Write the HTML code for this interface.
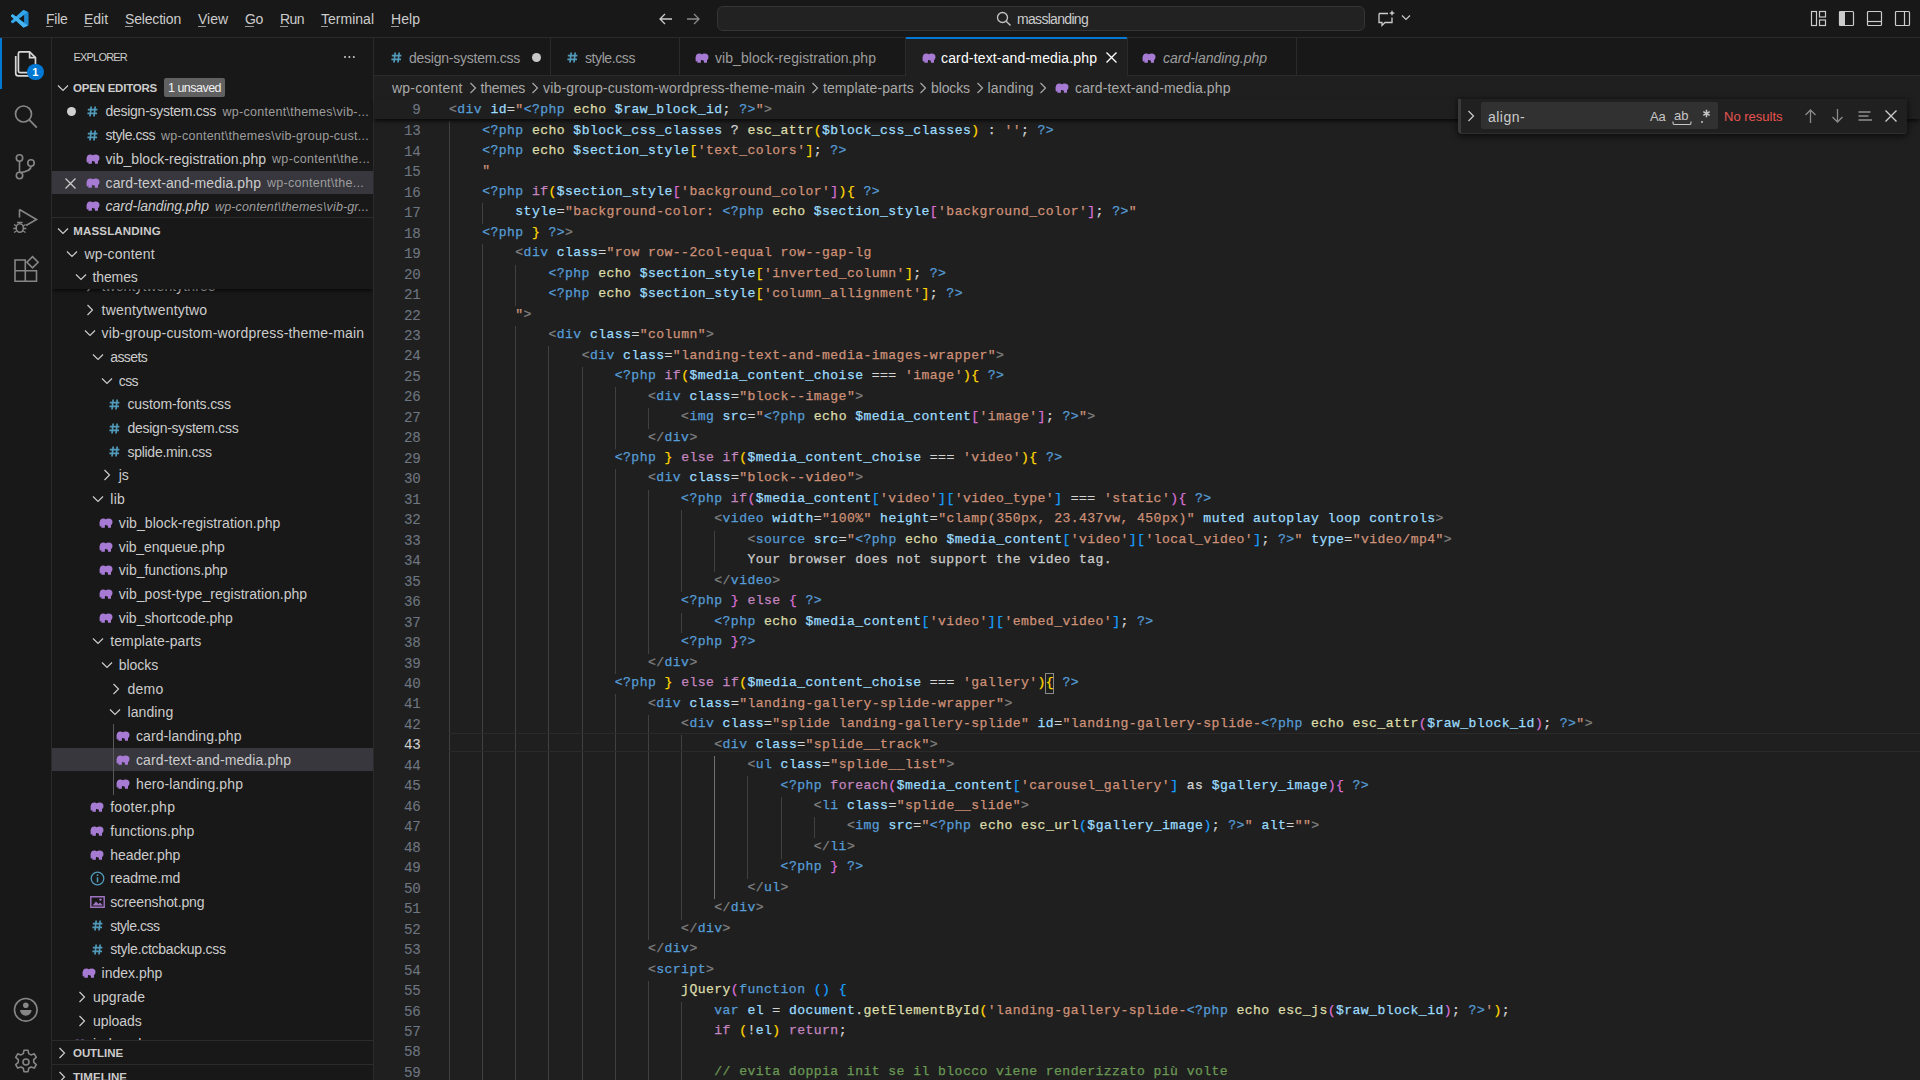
<!DOCTYPE html>
<html><head><meta charset="utf-8"><title>VS Code</title><style>
html,body{margin:0;padding:0;background:#1f1f1f;width:1920px;height:1080px;overflow:hidden}
body{position:relative;font-family:"Liberation Sans",sans-serif}
.box{position:absolute}
.ic{position:absolute;overflow:visible}
.t{position:absolute;white-space:pre;line-height:20px;height:20px}
.ln{position:absolute;left:380px;width:40.5px;text-align:right;font-family:"Liberation Mono",monospace;font-size:14.2px;letter-spacing:-0.230px;-webkit-text-stroke:0.1px currentColor;line-height:20.47px;height:20.47px;white-space:pre}
.cl{position:absolute;font-family:"Liberation Mono",monospace;font-size:13.1px;letter-spacing:0.430px;line-height:20.47px;height:20.47px;white-space:pre;-webkit-text-stroke:0.25px currentColor}
.qt{color:#808080}.qn{color:#569cd6}.qa{color:#9cdcfe}.qs{color:#ce9178}.qp{color:#569cd6}.qf{color:#dcdcaa}.qv{color:#9cdcfe}.qk{color:#c586c0}.qw{color:#cccccc}.qo{color:#d4d4d4}.qg{color:#ffd700}.qr{color:#da70d6}.qb{color:#179fff}.qc{color:#6a9955}.qx{color:#cccccc}</style></head>
<body>
<div class="box" style="left:0;top:0;width:1920px;height:37px;background:#181818;border-bottom:1px solid #2b2b2b"></div>
<svg class="ic" style="left:10.5px;top:9.5px" width="17.5" height="17.5" viewBox="0 0 100 100"><path fill="#1f8ad2" d="M96.5 10.8L75.9.9c-2.4-1.2-5.2-.7-7.1 1.2L29.4 38 12.2 25c-1.6-1.2-3.8-1.1-5.3.2L1.4 30.3c-1.8 1.7-1.8 4.5 0 6.2L16.3 50 1.4 63.5c-1.8 1.7-1.8 4.5 0 6.2l5.5 5c1.5 1.4 3.7 1.5 5.3.2L29.4 62l39.4 35.9c1.9 1.9 4.7 2.4 7.1 1.2l20.6-9.9c2.2-1 3.5-3.2 3.5-5.6V16.4c0-2.4-1.4-4.6-3.5-5.6zM75 72.7L45.1 50 75 27.3v45.4z"/><path fill="#35a7ec" d="M96.5 10.8L75.9.9c-2.4-1.2-5.2-.7-7.1 1.2L1.4 63.5c-1.8 1.7-1.8 4.5 0 6.2l5.5 5c1.5 1.4 3.7 1.5 5.3.2L93.3 13.2c2.7-2.1 6.7-.1 6.7 3.3v-.2c0-2.4-1.4-4.5-3.5-5.5z" opacity=".9"/><path fill="#45b5f2" d="M75.9 99.1c-2.4 1.2-5.2.7-7.1-1.2L1.4 36.5c-1.8-1.7-1.8-4.5 0-6.2l5.5-5c1.5-1.4 3.7-1.5 5.3-.2l81.1 61.8c2.7 2.1 6.7.1 6.7-3.3v.2c0 2.4-1.4 4.5-3.5 5.5z"/></svg>
<div class="t" style="left:46.00px;top:8.50px;font-size:14px;color:#cccccc;letter-spacing:-0.262px;">File</div>
<div class="box" style="left:46.0px;top:26px;width:6.8px;height:1px;background:#9a9a9a"></div>
<div class="t" style="left:84.00px;top:8.50px;font-size:14px;color:#cccccc;letter-spacing:-0.031px;">Edit</div>
<div class="box" style="left:84.0px;top:26px;width:7.5px;height:1px;background:#9a9a9a"></div>
<div class="t" style="left:125.00px;top:8.50px;font-size:14px;color:#cccccc;letter-spacing:-0.175px;">Selection</div>
<div class="box" style="left:125.0px;top:26px;width:7.5px;height:1px;background:#9a9a9a"></div>
<div class="t" style="left:198.00px;top:8.50px;font-size:14px;color:#cccccc;letter-spacing:-0.023px;">View</div>
<div class="box" style="left:198.0px;top:26px;width:7.5px;height:1px;background:#9a9a9a"></div>
<div class="t" style="left:245.00px;top:8.50px;font-size:14px;color:#cccccc;letter-spacing:-0.336px;">Go</div>
<div class="box" style="left:245.0px;top:26px;width:8.7px;height:1px;background:#9a9a9a"></div>
<div class="t" style="left:280.00px;top:8.50px;font-size:14px;color:#cccccc;letter-spacing:-0.557px;">Run</div>
<div class="box" style="left:280.0px;top:26px;width:8.1px;height:1px;background:#9a9a9a"></div>
<div class="t" style="left:321.00px;top:8.50px;font-size:14px;color:#cccccc;letter-spacing:0.016px;">Terminal</div>
<div class="box" style="left:321.0px;top:26px;width:6.8px;height:1px;background:#9a9a9a"></div>
<div class="t" style="left:391.00px;top:8.50px;font-size:14px;color:#cccccc;letter-spacing:0.055px;">Help</div>
<div class="box" style="left:391.0px;top:26px;width:8.1px;height:1px;background:#9a9a9a"></div>
<svg class="ic" style="left:657px;top:11px" width="17" height="16" viewBox="0 0 17 16"><path d="M15 8H3M8 3L3 8l5 5" fill="none" stroke="#cccccc" stroke-width="1.3"/></svg>
<svg class="ic" style="left:685px;top:11px" width="17" height="16" viewBox="0 0 17 16"><path d="M2 8h12M9 3l5 5-5 5" fill="none" stroke="#8a8a8a" stroke-width="1.3"/></svg>
<div class="box" style="left:717px;top:6px;width:646px;height:23px;background:#222222;border:1px solid #353535;border-radius:6px"></div>
<svg class="ic" style="left:996px;top:11px" width="16" height="16" viewBox="0 0 16 16"><circle cx="6.5" cy="6.5" r="5" fill="none" stroke="#c4c4c4" stroke-width="1.3"/><path d="M10.2 10.2l4.3 4.3" stroke="#c4c4c4" stroke-width="1.4"/></svg>
<div class="t" style="left:1017.00px;top:9.00px;font-size:14px;color:#cccccc;letter-spacing:-0.688px;">masslanding</div>
<svg class="ic" style="left:1377px;top:9px" width="20" height="19" viewBox="0 0 20 19"><path d="M2 4.5h9M2 4.5v9h3v3l3-3h7v-5" fill="none" stroke="#cccccc" stroke-width="1.3"/><path d="M15 1l.9 2.2 2.2.8-2.2.9L15 7l-.9-2.1L12 4l2.1-.8z" fill="#cccccc"/></svg>
<svg class="ic" style="left:1401px;top:14px" width="10" height="7" viewBox="0 0 10 7"><path d="M1 1.5l4 4 4-4" fill="none" stroke="#cccccc" stroke-width="1.2"/></svg>
<svg class="ic" style="left:1810px;top:10px" width="17" height="17" viewBox="0 0 17 17"><rect x="1.5" y="1.5" width="5" height="14" fill="none" stroke="#cccccc" stroke-width="1.2"/><rect x="9.5" y="1.5" width="6" height="5.5" fill="none" stroke="#cccccc" stroke-width="1.2"/><rect x="9.5" y="10" width="6" height="5.5" fill="none" stroke="#cccccc" stroke-width="1.2"/></svg>
<svg class="ic" style="left:1838px;top:10px" width="17" height="17" viewBox="0 0 17 17"><rect x="1.5" y="1.5" width="14" height="14" rx="1" fill="none" stroke="#cccccc" stroke-width="1.2"/><rect x="1.5" y="1.5" width="5.5" height="14" fill="#cccccc"/></svg>
<svg class="ic" style="left:1866px;top:10px" width="17" height="17" viewBox="0 0 17 17"><rect x="1.5" y="1.5" width="14" height="14" rx="1" fill="none" stroke="#cccccc" stroke-width="1.2"/><path d="M1.5 11.5h14" stroke="#cccccc" stroke-width="1.2"/></svg>
<svg class="ic" style="left:1894px;top:10px" width="17" height="17" viewBox="0 0 17 17"><rect x="1.5" y="1.5" width="14" height="14" rx="1" fill="none" stroke="#cccccc" stroke-width="1.2"/><path d="M10.5 1.5v14" stroke="#cccccc" stroke-width="1.2"/></svg>
<div class="box" style="left:0;top:38px;width:51px;height:1042px;background:#181818;border-right:1px solid #2b2b2b"></div>
<div class="box" style="left:0;top:38px;width:2px;height:51px;background:#0078d4"></div>
<svg class="ic" style="left:12.5px;top:46.5px" width="30" height="32" viewBox="0 0 28 30"><path d="M6.5 4.5h9l5.5 5.5v12.5a1.5 1.5 0 0 1-1.5 1.5h-13a1.5 1.5 0 0 1-1.5-1.5v-16.5a1.5 1.5 0 0 1 1.5-1.5z" fill="none" stroke="#d7d7d7" stroke-width="1.6"/><path d="M15.5 4.5v5.5h5.5" fill="none" stroke="#d7d7d7" stroke-width="1.6"/><path d="M2.5 8.5v16a2.5 2.5 0 0 0 2.5 2.5h11" fill="none" stroke="#d7d7d7" stroke-width="1.6"/></svg>
<div class="box" style="left:27px;top:63.7px;width:16.5px;height:16.5px;border-radius:50%;background:#0078d4"></div>
<div class="t" style="left:27.3px;top:62px;width:16px;text-align:center;font-size:11px;color:#ffffff;font-weight:bold">1</div>
<svg class="ic" style="left:11.5px;top:102px" width="30" height="30" viewBox="0 0 30 30"><circle cx="11.5" cy="12" r="8" fill="none" stroke="#868686" stroke-width="1.7"/><path d="M17.3 17.8l7.5 7.8" stroke="#868686" stroke-width="1.8"/></svg>
<svg class="ic" style="left:11px;top:151px" width="30" height="30" viewBox="0 0 30 30"><circle cx="8.5" cy="7" r="3.2" fill="none" stroke="#868686" stroke-width="1.6"/><circle cx="20" cy="12" r="3.2" fill="none" stroke="#868686" stroke-width="1.6"/><circle cx="8.5" cy="24.5" r="3.2" fill="none" stroke="#868686" stroke-width="1.6"/><path d="M8.5 10.2v11.1M20 15.2c0 4-4 5.3-11.3 6.5" fill="none" stroke="#868686" stroke-width="1.6"/></svg>
<svg class="ic" style="left:11px;top:204.5px" width="30" height="30" viewBox="0 0 30 30"><path d="M8.5 4.5v8M8.5 4.5l17 10-10.5 6" fill="none" stroke="#868686" stroke-width="1.6"/><ellipse cx="8.8" cy="23" rx="3.6" ry="4.2" fill="none" stroke="#868686" stroke-width="1.6"/><path d="M3 19.5l2.5 1.5M14.6 19.5l-2.5 1.5M2.3 23.5h3M12.3 23.5h3M3 27.5l2.5-1.5M14.6 27.5l-2.5-1.5M6 17.5h5.6" fill="none" stroke="#868686" stroke-width="1.4"/></svg>
<svg class="ic" style="left:11px;top:254px" width="30" height="30" viewBox="0 0 30 30"><path d="M4 6h10.3v10.8H4zM4 16.8h10.3v10.5H4zM14.3 16.8h11.2v10.5H14.3z" fill="none" stroke="#868686" stroke-width="1.6"/><path d="M21.5 2.6l5.6 5.6-5.6 5.6-5.6-5.6z" fill="none" stroke="#868686" stroke-width="1.6"/></svg>
<svg class="ic" style="left:11px;top:995px" width="30" height="30" viewBox="0 0 30 30"><circle cx="14.8" cy="14.8" r="11.3" fill="none" stroke="#868686" stroke-width="1.6"/><circle cx="14.8" cy="10.3" r="2.8" fill="#868686"/><path d="M9 15h11.6a5.8 5.8 0 0 1-11.6 0z" fill="#868686"/></svg>
<svg class="ic" style="left:11px;top:1047px" width="30" height="30" viewBox="0 0 30 30"><path d="M13 3.2h4l.7 3.4 2.3 1.3 3.3-1.1 2 3.5-2.6 2.3v2.7l2.6 2.3-2 3.5-3.3-1.1-2.3 1.3-.7 3.4h-4l-.7-3.4-2.3-1.3-3.3 1.1-2-3.5 2.6-2.3v-2.7L4.7 10.3l2-3.5 3.3 1.1 2.3-1.3z" fill="none" stroke="#868686" stroke-width="1.6" stroke-linejoin="round"/><circle cx="15" cy="15" r="3" fill="none" stroke="#868686" stroke-width="1.6"/></svg>
<div class="box" style="left:52px;top:38px;width:321px;height:1042px;background:#181818;border-right:1px solid #2b2b2b"></div>
<div class="t" style="left:73.50px;top:47.00px;font-size:11px;color:#cccccc;letter-spacing:-0.805px;">EXPLORER</div>
<div class="box" style="left:343.8px;top:55.6px;width:2.6px;height:2.6px;background:#cccccc;border-radius:50%;box-shadow:4.4px 0 0 #cccccc, 8.8px 0 0 #cccccc"></div>
<svg class="ic" style="left:56.50px;top:83.50px" width="12" height="8" viewBox="0 0 12 8"><path d="M1 1.5l5 5 5-5" fill="none" stroke="#cccccc" stroke-width="1.2"/></svg>
<div class="t" style="left:73.00px;top:77.50px;font-size:11.5px;color:#cccccc;letter-spacing:-0.225px;font-weight:bold;">OPEN EDITORS</div>
<div class="box" style="left:164px;top:78px;width:61px;height:19px;background:#616161;border-radius:2px"></div>
<div class="t" style="left:168.00px;top:78.00px;font-size:12.5px;color:#f0f0f0;letter-spacing:-0.521px;">1 unsaved</div>
<div class="box" style="left:52px;top:171px;width:321px;height:22.5px;background:#37373d"></div>
<div class="box" style="left:66.5px;top:106.75px;width:9px;height:9px;border-radius:50%;background:#d0d0d0"></div>
<svg class="ic" style="left:87.00px;top:105.75px" width="11" height="11" viewBox="0 0 11 11"><path d="M4.2 .5L3 10.5M8.2 .5L7 10.5M.8 3.6h9.6M.4 7.4h9.6" fill="none" stroke="#519aba" stroke-width="1.7"/></svg>
<div class="t" style="left:105.50px;top:101.25px;font-size:14px;color:#cccccc;letter-spacing:-0.271px;">design-system.css</div>
<div class="t" style="left:222.50px;top:101.75px;font-size:12.5px;color:#9d9d9d;letter-spacing:0.276px;">wp-content\themes\vib-...</div>
<svg class="ic" style="left:87.00px;top:129.50px" width="11" height="11" viewBox="0 0 11 11"><path d="M4.2 .5L3 10.5M8.2 .5L7 10.5M.8 3.6h9.6M.4 7.4h9.6" fill="none" stroke="#519aba" stroke-width="1.7"/></svg>
<div class="t" style="left:105.50px;top:125.00px;font-size:14px;color:#cccccc;letter-spacing:-0.464px;">style.css</div>
<div class="t" style="left:161.00px;top:125.50px;font-size:12.5px;color:#9d9d9d;letter-spacing:0.267px;">wp-content\themes\vib-group-cust...</div>
<svg class="ic" style="left:85.50px;top:153.75px" width="14" height="10.00" viewBox="0 0 14 10"><g fill="#a77bd4"><circle cx="4.3" cy="3.9" r="3.5"/><ellipse cx="9.6" cy="4.1" rx="3.9" ry="3.6"/><rect x="2.3" y="4.5" width="3.6" height="5.3" rx=".6"/><rect x="8.9" y="4.5" width="3.1" height="5.3" rx=".6"/><rect x=".6" y="3.6" width="2" height="5" rx="1"/></g></svg>
<div class="t" style="left:105.50px;top:148.75px;font-size:14px;color:#cccccc;letter-spacing:0.040px;">vib_block-registration.php</div>
<div class="t" style="left:272.00px;top:149.25px;font-size:12.5px;color:#9d9d9d;letter-spacing:0.330px;">wp-content\the...</div>
<svg class="ic" style="left:64px;top:176.50px" width="13" height="13" viewBox="0 0 13 13"><path d="M1.5 1.5l10 10M11.5 1.5l-10 10" stroke="#cccccc" stroke-width="1.3"/></svg>
<svg class="ic" style="left:85.50px;top:177.50px" width="14" height="10.00" viewBox="0 0 14 10"><g fill="#a77bd4"><circle cx="4.3" cy="3.9" r="3.5"/><ellipse cx="9.6" cy="4.1" rx="3.9" ry="3.6"/><rect x="2.3" y="4.5" width="3.6" height="5.3" rx=".6"/><rect x="8.9" y="4.5" width="3.1" height="5.3" rx=".6"/><rect x=".6" y="3.6" width="2" height="5" rx="1"/></g></svg>
<div class="t" style="left:105.50px;top:172.50px;font-size:14px;color:#cccccc;letter-spacing:0.133px;">card-text-and-media.php</div>
<div class="t" style="left:267.00px;top:173.00px;font-size:12.5px;color:#9d9d9d;letter-spacing:0.271px;">wp-content\the...</div>
<svg class="ic" style="left:85.50px;top:201.25px" width="14" height="10.00" viewBox="0 0 14 10"><g fill="#a77bd4"><circle cx="4.3" cy="3.9" r="3.5"/><ellipse cx="9.6" cy="4.1" rx="3.9" ry="3.6"/><rect x="2.3" y="4.5" width="3.6" height="5.3" rx=".6"/><rect x="8.9" y="4.5" width="3.1" height="5.3" rx=".6"/><rect x=".6" y="3.6" width="2" height="5" rx="1"/></g></svg>
<div class="t" style="left:105.50px;top:196.25px;font-size:14px;color:#cccccc;letter-spacing:-0.046px;font-style:italic;">card-landing.php</div>
<div class="t" style="left:215.00px;top:196.75px;font-size:12.5px;color:#9d9d9d;letter-spacing:0.139px;font-style:italic;">wp-content\themes\vib-gr...</div>
<div class="box" style="left:52px;top:217px;width:321px;height:1px;background:#2b2b2b"></div>
<svg class="ic" style="left:56.50px;top:226.50px" width="12" height="8" viewBox="0 0 12 8"><path d="M1 1.5l5 5 5-5" fill="none" stroke="#cccccc" stroke-width="1.2"/></svg>
<div class="t" style="left:73.20px;top:220.50px;font-size:11.5px;color:#cccccc;letter-spacing:0.187px;font-weight:bold;">MASSLANDING</div>
<div class="box" style="left:52px;top:242px;width:321px;height:798px;overflow:hidden"><div class="box" style="left:0;top:506.30px;width:321px;height:23px;background:#37373d"></div><svg class="ic" style="left:34.10px;top:37.80px" width="8" height="12" viewBox="0 0 8 12"><path d="M1.5 1l5 5-5 5" fill="none" stroke="#cccccc" stroke-width="1.2"/></svg><div class="t" style="left:49.60px;top:33.80px;font-size:14px;color:#cccccc;letter-spacing:0.071px;">twentytwentythree</div><svg class="ic" style="left:34.10px;top:61.50px" width="8" height="12" viewBox="0 0 8 12"><path d="M1.5 1l5 5-5 5" fill="none" stroke="#cccccc" stroke-width="1.2"/></svg><div class="t" style="left:49.60px;top:57.50px;font-size:14px;color:#cccccc;letter-spacing:0.204px;">twentytwentytwo</div><svg class="ic" style="left:31.60px;top:87.20px" width="12" height="8" viewBox="0 0 12 8"><path d="M1 1.5l5 5 5-5" fill="none" stroke="#cccccc" stroke-width="1.2"/></svg><div class="t" style="left:49.60px;top:81.20px;font-size:14px;color:#cccccc;letter-spacing:0.180px;">vib-group-custom-wordpress-theme-main</div><svg class="ic" style="left:40.20px;top:110.90px" width="12" height="8" viewBox="0 0 12 8"><path d="M1 1.5l5 5 5-5" fill="none" stroke="#cccccc" stroke-width="1.2"/></svg><div class="t" style="left:58.20px;top:104.90px;font-size:14px;color:#cccccc;letter-spacing:-0.576px;">assets</div><svg class="ic" style="left:48.80px;top:134.60px" width="12" height="8" viewBox="0 0 12 8"><path d="M1 1.5l5 5 5-5" fill="none" stroke="#cccccc" stroke-width="1.2"/></svg><div class="t" style="left:66.80px;top:128.60px;font-size:14px;color:#cccccc;letter-spacing:-0.667px;">css</div><svg class="ic" style="left:56.90px;top:156.80px" width="11" height="11" viewBox="0 0 11 11"><path d="M4.2 .5L3 10.5M8.2 .5L7 10.5M.8 3.6h9.6M.4 7.4h9.6" fill="none" stroke="#519aba" stroke-width="1.7"/></svg><div class="t" style="left:75.40px;top:152.30px;font-size:14px;color:#cccccc;letter-spacing:-0.094px;">custom-fonts.css</div><svg class="ic" style="left:56.90px;top:180.50px" width="11" height="11" viewBox="0 0 11 11"><path d="M4.2 .5L3 10.5M8.2 .5L7 10.5M.8 3.6h9.6M.4 7.4h9.6" fill="none" stroke="#519aba" stroke-width="1.7"/></svg><div class="t" style="left:75.40px;top:176.00px;font-size:14px;color:#cccccc;letter-spacing:-0.242px;">design-system.css</div><svg class="ic" style="left:56.90px;top:204.20px" width="11" height="11" viewBox="0 0 11 11"><path d="M4.2 .5L3 10.5M8.2 .5L7 10.5M.8 3.6h9.6M.4 7.4h9.6" fill="none" stroke="#519aba" stroke-width="1.7"/></svg><div class="t" style="left:75.40px;top:199.70px;font-size:14px;color:#cccccc;letter-spacing:-0.260px;">splide.min.css</div><svg class="ic" style="left:51.30px;top:227.40px" width="8" height="12" viewBox="0 0 8 12"><path d="M1.5 1l5 5-5 5" fill="none" stroke="#cccccc" stroke-width="1.2"/></svg><div class="t" style="left:66.80px;top:223.40px;font-size:14px;color:#cccccc;letter-spacing:-0.055px;">js</div><svg class="ic" style="left:40.20px;top:253.10px" width="12" height="8" viewBox="0 0 12 8"><path d="M1 1.5l5 5 5-5" fill="none" stroke="#cccccc" stroke-width="1.2"/></svg><div class="t" style="left:58.20px;top:247.10px;font-size:14px;color:#cccccc;letter-spacing:0.333px;">lib</div><svg class="ic" style="left:46.80px;top:275.80px" width="14" height="10.00" viewBox="0 0 14 10"><g fill="#a77bd4"><circle cx="4.3" cy="3.9" r="3.5"/><ellipse cx="9.6" cy="4.1" rx="3.9" ry="3.6"/><rect x="2.3" y="4.5" width="3.6" height="5.3" rx=".6"/><rect x="8.9" y="4.5" width="3.1" height="5.3" rx=".6"/><rect x=".6" y="3.6" width="2" height="5" rx="1"/></g></svg><div class="t" style="left:66.80px;top:270.80px;font-size:14px;color:#cccccc;letter-spacing:0.079px;">vib_block-registration.php</div><svg class="ic" style="left:46.80px;top:299.50px" width="14" height="10.00" viewBox="0 0 14 10"><g fill="#a77bd4"><circle cx="4.3" cy="3.9" r="3.5"/><ellipse cx="9.6" cy="4.1" rx="3.9" ry="3.6"/><rect x="2.3" y="4.5" width="3.6" height="5.3" rx=".6"/><rect x="8.9" y="4.5" width="3.1" height="5.3" rx=".6"/><rect x=".6" y="3.6" width="2" height="5" rx="1"/></g></svg><div class="t" style="left:66.80px;top:294.50px;font-size:14px;color:#cccccc;letter-spacing:-0.108px;">vib_enqueue.php</div><svg class="ic" style="left:46.80px;top:323.20px" width="14" height="10.00" viewBox="0 0 14 10"><g fill="#a77bd4"><circle cx="4.3" cy="3.9" r="3.5"/><ellipse cx="9.6" cy="4.1" rx="3.9" ry="3.6"/><rect x="2.3" y="4.5" width="3.6" height="5.3" rx=".6"/><rect x="8.9" y="4.5" width="3.1" height="5.3" rx=".6"/><rect x=".6" y="3.6" width="2" height="5" rx="1"/></g></svg><div class="t" style="left:66.80px;top:318.20px;font-size:14px;color:#cccccc;letter-spacing:-0.010px;">vib_functions.php</div><svg class="ic" style="left:46.80px;top:346.90px" width="14" height="10.00" viewBox="0 0 14 10"><g fill="#a77bd4"><circle cx="4.3" cy="3.9" r="3.5"/><ellipse cx="9.6" cy="4.1" rx="3.9" ry="3.6"/><rect x="2.3" y="4.5" width="3.6" height="5.3" rx=".6"/><rect x="8.9" y="4.5" width="3.1" height="5.3" rx=".6"/><rect x=".6" y="3.6" width="2" height="5" rx="1"/></g></svg><div class="t" style="left:66.80px;top:341.90px;font-size:14px;color:#cccccc;letter-spacing:0.026px;">vib_post-type_registration.php</div><svg class="ic" style="left:46.80px;top:370.60px" width="14" height="10.00" viewBox="0 0 14 10"><g fill="#a77bd4"><circle cx="4.3" cy="3.9" r="3.5"/><ellipse cx="9.6" cy="4.1" rx="3.9" ry="3.6"/><rect x="2.3" y="4.5" width="3.6" height="5.3" rx=".6"/><rect x="8.9" y="4.5" width="3.1" height="5.3" rx=".6"/><rect x=".6" y="3.6" width="2" height="5" rx="1"/></g></svg><div class="t" style="left:66.80px;top:365.60px;font-size:14px;color:#cccccc;letter-spacing:-0.021px;">vib_shortcode.php</div><svg class="ic" style="left:40.20px;top:395.30px" width="12" height="8" viewBox="0 0 12 8"><path d="M1 1.5l5 5 5-5" fill="none" stroke="#cccccc" stroke-width="1.2"/></svg><div class="t" style="left:58.20px;top:389.30px;font-size:14px;color:#cccccc;letter-spacing:0.129px;">template-parts</div><svg class="ic" style="left:48.80px;top:419.00px" width="12" height="8" viewBox="0 0 12 8"><path d="M1 1.5l5 5 5-5" fill="none" stroke="#cccccc" stroke-width="1.2"/></svg><div class="t" style="left:66.80px;top:413.00px;font-size:14px;color:#cccccc;letter-spacing:-0.070px;">blocks</div><svg class="ic" style="left:59.90px;top:440.70px" width="8" height="12" viewBox="0 0 8 12"><path d="M1.5 1l5 5-5 5" fill="none" stroke="#cccccc" stroke-width="1.2"/></svg><div class="t" style="left:75.40px;top:436.70px;font-size:14px;color:#cccccc;letter-spacing:0.250px;">demo</div><svg class="ic" style="left:57.40px;top:466.40px" width="12" height="8" viewBox="0 0 12 8"><path d="M1 1.5l5 5 5-5" fill="none" stroke="#cccccc" stroke-width="1.2"/></svg><div class="t" style="left:75.40px;top:460.40px;font-size:14px;color:#cccccc;letter-spacing:0.125px;">landing</div><svg class="ic" style="left:64.00px;top:489.10px" width="14" height="10.00" viewBox="0 0 14 10"><g fill="#a77bd4"><circle cx="4.3" cy="3.9" r="3.5"/><ellipse cx="9.6" cy="4.1" rx="3.9" ry="3.6"/><rect x="2.3" y="4.5" width="3.6" height="5.3" rx=".6"/><rect x="8.9" y="4.5" width="3.1" height="5.3" rx=".6"/><rect x=".6" y="3.6" width="2" height="5" rx="1"/></g></svg><div class="t" style="left:84.00px;top:484.10px;font-size:14px;color:#cccccc;letter-spacing:0.079px;">card-landing.php</div><svg class="ic" style="left:64.00px;top:512.80px" width="14" height="10.00" viewBox="0 0 14 10"><g fill="#a77bd4"><circle cx="4.3" cy="3.9" r="3.5"/><ellipse cx="9.6" cy="4.1" rx="3.9" ry="3.6"/><rect x="2.3" y="4.5" width="3.6" height="5.3" rx=".6"/><rect x="8.9" y="4.5" width="3.1" height="5.3" rx=".6"/><rect x=".6" y="3.6" width="2" height="5" rx="1"/></g></svg><div class="t" style="left:84.00px;top:507.80px;font-size:14px;color:#cccccc;letter-spacing:0.111px;">card-text-and-media.php</div><svg class="ic" style="left:64.00px;top:536.50px" width="14" height="10.00" viewBox="0 0 14 10"><g fill="#a77bd4"><circle cx="4.3" cy="3.9" r="3.5"/><ellipse cx="9.6" cy="4.1" rx="3.9" ry="3.6"/><rect x="2.3" y="4.5" width="3.6" height="5.3" rx=".6"/><rect x="8.9" y="4.5" width="3.1" height="5.3" rx=".6"/><rect x=".6" y="3.6" width="2" height="5" rx="1"/></g></svg><div class="t" style="left:84.00px;top:531.50px;font-size:14px;color:#cccccc;letter-spacing:0.124px;">hero-landing.php</div><svg class="ic" style="left:38.20px;top:560.20px" width="14" height="10.00" viewBox="0 0 14 10"><g fill="#a77bd4"><circle cx="4.3" cy="3.9" r="3.5"/><ellipse cx="9.6" cy="4.1" rx="3.9" ry="3.6"/><rect x="2.3" y="4.5" width="3.6" height="5.3" rx=".6"/><rect x="8.9" y="4.5" width="3.1" height="5.3" rx=".6"/><rect x=".6" y="3.6" width="2" height="5" rx="1"/></g></svg><div class="t" style="left:58.20px;top:555.20px;font-size:14px;color:#cccccc;letter-spacing:0.275px;">footer.php</div><svg class="ic" style="left:38.20px;top:583.90px" width="14" height="10.00" viewBox="0 0 14 10"><g fill="#a77bd4"><circle cx="4.3" cy="3.9" r="3.5"/><ellipse cx="9.6" cy="4.1" rx="3.9" ry="3.6"/><rect x="2.3" y="4.5" width="3.6" height="5.3" rx=".6"/><rect x="8.9" y="4.5" width="3.1" height="5.3" rx=".6"/><rect x=".6" y="3.6" width="2" height="5" rx="1"/></g></svg><div class="t" style="left:58.20px;top:578.90px;font-size:14px;color:#cccccc;letter-spacing:0.077px;">functions.php</div><svg class="ic" style="left:38.20px;top:607.60px" width="14" height="10.00" viewBox="0 0 14 10"><g fill="#a77bd4"><circle cx="4.3" cy="3.9" r="3.5"/><ellipse cx="9.6" cy="4.1" rx="3.9" ry="3.6"/><rect x="2.3" y="4.5" width="3.6" height="5.3" rx=".6"/><rect x="8.9" y="4.5" width="3.1" height="5.3" rx=".6"/><rect x=".6" y="3.6" width="2" height="5" rx="1"/></g></svg><div class="t" style="left:58.20px;top:602.60px;font-size:14px;color:#cccccc;letter-spacing:-0.003px;">header.php</div><svg class="ic" style="left:37.70px;top:628.80px" width="15" height="15" viewBox="0 0 15 15"><circle cx="7.5" cy="7.5" r="6.3" fill="none" stroke="#519aba" stroke-width="1.3"/><path d="M7.5 6.3v5" stroke="#519aba" stroke-width="1.5"/><circle cx="7.5" cy="4.2" r=".9" fill="#519aba"/></svg><div class="t" style="left:58.20px;top:626.30px;font-size:14px;color:#cccccc;letter-spacing:-0.085px;">readme.md</div><svg class="ic" style="left:38.20px;top:654.00px" width="15" height="12" viewBox="0 0 15 12"><path d="M.8.8h13.4v10.4H.8z" fill="none" stroke="#a074c4" stroke-width="1.4"/><path d="M2.5 9.5l3.5-4 2.5 2.5 1.5-1.5 3 3z" fill="#a074c4"/><circle cx="10.5" cy="3.6" r="1.2" fill="#a074c4"/></svg><div class="t" style="left:58.20px;top:650.00px;font-size:14px;color:#cccccc;letter-spacing:-0.103px;">screenshot.png</div><svg class="ic" style="left:39.70px;top:678.20px" width="11" height="11" viewBox="0 0 11 11"><path d="M4.2 .5L3 10.5M8.2 .5L7 10.5M.8 3.6h9.6M.4 7.4h9.6" fill="none" stroke="#519aba" stroke-width="1.7"/></svg><div class="t" style="left:58.20px;top:673.70px;font-size:14px;color:#cccccc;letter-spacing:-0.491px;">style.css</div><svg class="ic" style="left:39.70px;top:701.90px" width="11" height="11" viewBox="0 0 11 11"><path d="M4.2 .5L3 10.5M8.2 .5L7 10.5M.8 3.6h9.6M.4 7.4h9.6" fill="none" stroke="#519aba" stroke-width="1.7"/></svg><div class="t" style="left:58.20px;top:697.40px;font-size:14px;color:#cccccc;letter-spacing:-0.267px;">style.ctcbackup.css</div><svg class="ic" style="left:29.60px;top:726.10px" width="14" height="10.00" viewBox="0 0 14 10"><g fill="#a77bd4"><circle cx="4.3" cy="3.9" r="3.5"/><ellipse cx="9.6" cy="4.1" rx="3.9" ry="3.6"/><rect x="2.3" y="4.5" width="3.6" height="5.3" rx=".6"/><rect x="8.9" y="4.5" width="3.1" height="5.3" rx=".6"/><rect x=".6" y="3.6" width="2" height="5" rx="1"/></g></svg><div class="t" style="left:49.60px;top:721.10px;font-size:14px;color:#cccccc;letter-spacing:0.007px;">index.php</div><svg class="ic" style="left:25.50px;top:748.80px" width="8" height="12" viewBox="0 0 8 12"><path d="M1.5 1l5 5-5 5" fill="none" stroke="#cccccc" stroke-width="1.2"/></svg><div class="t" style="left:41.00px;top:744.80px;font-size:14px;color:#cccccc;letter-spacing:0.094px;">upgrade</div><svg class="ic" style="left:25.50px;top:772.50px" width="8" height="12" viewBox="0 0 8 12"><path d="M1.5 1l5 5-5 5" fill="none" stroke="#cccccc" stroke-width="1.2"/></svg><div class="t" style="left:41.00px;top:768.50px;font-size:14px;color:#cccccc;letter-spacing:-0.038px;">uploads</div><svg class="ic" style="left:21.00px;top:797.20px" width="14" height="10.00" viewBox="0 0 14 10"><g fill="#a77bd4"><circle cx="4.3" cy="3.9" r="3.5"/><ellipse cx="9.6" cy="4.1" rx="3.9" ry="3.6"/><rect x="2.3" y="4.5" width="3.6" height="5.3" rx=".6"/><rect x="8.9" y="4.5" width="3.1" height="5.3" rx=".6"/><rect x=".6" y="3.6" width="2" height="5" rx="1"/></g></svg><div class="t" style="left:41.00px;top:792.20px;font-size:14px;color:#cccccc;letter-spacing:0.007px;">index.php</div><div class="box" style="left:61px;top:482px;width:1px;height:71px;background:#585858"></div><div class="box" style="left:0;top:0px;width:321px;height:47px;background:#181818;box-shadow:0 3px 3px -1px rgba(0,0,0,0.6)"></div><svg class="ic" style="left:13.75px;top:7.70px" width="12" height="8" viewBox="0 0 12 8"><path d="M1 1.5l5 5 5-5" fill="none" stroke="#cccccc" stroke-width="1.2"/></svg><div class="t" style="left:32.40px;top:1.70px;font-size:14px;color:#cccccc;letter-spacing:0.195px;">wp-content</div><svg class="ic" style="left:22.50px;top:31.20px" width="12" height="8" viewBox="0 0 12 8"><path d="M1 1.5l5 5 5-5" fill="none" stroke="#cccccc" stroke-width="1.2"/></svg><div class="t" style="left:40.60px;top:25.20px;font-size:14px;color:#cccccc;letter-spacing:-0.148px;">themes</div></div>
<div class="box" style="left:52px;top:1040px;width:321px;height:40px;background:#181818;border-top:1px solid #2b2b2b"></div>
<svg class="ic" style="left:58.00px;top:1047.00px" width="8" height="12" viewBox="0 0 8 12"><path d="M1.5 1l5 5-5 5" fill="none" stroke="#cccccc" stroke-width="1.2"/></svg>
<div class="t" style="left:73.00px;top:1043.00px;font-size:11.5px;color:#cccccc;letter-spacing:-0.069px;font-weight:bold;">OUTLINE</div>
<div class="box" style="left:52px;top:1064.3px;width:321px;height:1px;background:#2b2b2b"></div>
<svg class="ic" style="left:58.00px;top:1071.00px" width="8" height="12" viewBox="0 0 8 12"><path d="M1.5 1l5 5-5 5" fill="none" stroke="#cccccc" stroke-width="1.2"/></svg>
<div class="t" style="left:73.00px;top:1067.00px;font-size:11.5px;color:#cccccc;letter-spacing:0.041px;font-weight:bold;">TIMELINE</div>
<div class="box" style="left:374px;top:38px;width:1546px;height:1042px;background:#1f1f1f"></div>
<div class="box" style="left:374px;top:38px;width:1546px;height:37px;background:#181818;border-bottom:1px solid #2b2b2b"></div>
<div class="box" style="left:374px;top:38px;width:176px;height:37px;background:#181818;border-right:1px solid #2b2b2b"></div>
<svg class="ic" style="left:391.00px;top:52.00px" width="11" height="11" viewBox="0 0 11 11"><path d="M4.2 .5L3 10.5M8.2 .5L7 10.5M.8 3.6h9.6M.4 7.4h9.6" fill="none" stroke="#519aba" stroke-width="1.7"/></svg>
<div class="t" style="left:409.00px;top:47.50px;font-size:14px;color:#9d9d9d;letter-spacing:-0.242px;">design-system.css</div>
<div class="box" style="left:531.5px;top:53.0px;width:9px;height:9px;border-radius:50%;background:#c8c8c8"></div>
<div class="box" style="left:551px;top:38px;width:128px;height:37px;background:#181818;border-right:1px solid #2b2b2b"></div>
<svg class="ic" style="left:567.00px;top:52.00px" width="11" height="11" viewBox="0 0 11 11"><path d="M4.2 .5L3 10.5M8.2 .5L7 10.5M.8 3.6h9.6M.4 7.4h9.6" fill="none" stroke="#519aba" stroke-width="1.7"/></svg>
<div class="t" style="left:585.00px;top:47.50px;font-size:14px;color:#9d9d9d;letter-spacing:-0.408px;">style.css</div>
<div class="box" style="left:680px;top:38px;width:225px;height:37px;background:#181818;border-right:1px solid #2b2b2b"></div>
<svg class="ic" style="left:695.00px;top:52.50px" width="14" height="10.00" viewBox="0 0 14 10"><g fill="#a77bd4"><circle cx="4.3" cy="3.9" r="3.5"/><ellipse cx="9.6" cy="4.1" rx="3.9" ry="3.6"/><rect x="2.3" y="4.5" width="3.6" height="5.3" rx=".6"/><rect x="8.9" y="4.5" width="3.1" height="5.3" rx=".6"/><rect x=".6" y="3.6" width="2" height="5" rx="1"/></g></svg>
<div class="t" style="left:715.00px;top:47.50px;font-size:14px;color:#9d9d9d;letter-spacing:0.059px;">vib_block-registration.php</div>
<div class="box" style="left:906px;top:38px;width:221px;height:38px;background:#1f1f1f;border-right:1px solid #2b2b2b"></div>
<div class="box" style="left:906px;top:37px;width:221px;height:1.5px;background:#0078d4"></div>
<svg class="ic" style="left:922.00px;top:52.50px" width="14" height="10.00" viewBox="0 0 14 10"><g fill="#a77bd4"><circle cx="4.3" cy="3.9" r="3.5"/><ellipse cx="9.6" cy="4.1" rx="3.9" ry="3.6"/><rect x="2.3" y="4.5" width="3.6" height="5.3" rx=".6"/><rect x="8.9" y="4.5" width="3.1" height="5.3" rx=".6"/><rect x=".6" y="3.6" width="2" height="5" rx="1"/></g></svg>
<div class="t" style="left:941.00px;top:47.50px;font-size:14px;color:#ffffff;letter-spacing:0.155px;">card-text-and-media.php</div>
<svg class="ic" style="left:1105px;top:51.0px" width="13" height="13" viewBox="0 0 13 13"><path d="M1.5 1.5l10 10M11.5 1.5l-10 10" stroke="#ffffff" stroke-width="1.4"/></svg>
<div class="box" style="left:1128px;top:38px;width:168px;height:37px;background:#181818;border-right:1px solid #2b2b2b"></div>
<svg class="ic" style="left:1142.00px;top:52.50px" width="14" height="10.00" viewBox="0 0 14 10"><g fill="#a77bd4"><circle cx="4.3" cy="3.9" r="3.5"/><ellipse cx="9.6" cy="4.1" rx="3.9" ry="3.6"/><rect x="2.3" y="4.5" width="3.6" height="5.3" rx=".6"/><rect x="8.9" y="4.5" width="3.1" height="5.3" rx=".6"/><rect x=".6" y="3.6" width="2" height="5" rx="1"/></g></svg>
<div class="t" style="left:1163.00px;top:47.50px;font-size:14px;color:#9d9d9d;letter-spacing:-0.015px;font-style:italic;">card-landing.php</div>
<div class="t" style="left:392.00px;top:78.00px;font-size:14px;color:#a9a9a9;letter-spacing:0.205px;">wp-content</div>
<div class="t" style="left:480.50px;top:78.00px;font-size:14px;color:#a9a9a9;letter-spacing:-0.232px;">themes</div>
<div class="t" style="left:543.00px;top:78.00px;font-size:14px;color:#a9a9a9;letter-spacing:0.167px;">vib-group-custom-wordpress-theme-main</div>
<div class="t" style="left:823.00px;top:78.00px;font-size:14px;color:#a9a9a9;letter-spacing:0.094px;">template-parts</div>
<div class="t" style="left:931.00px;top:78.00px;font-size:14px;color:#a9a9a9;letter-spacing:-0.112px;">blocks</div>
<div class="t" style="left:987.50px;top:78.00px;font-size:14px;color:#a9a9a9;letter-spacing:0.161px;">landing</div>
<svg class="ic" style="left:468.50px;top:82.00px" width="8" height="12" viewBox="0 0 8 12"><path d="M1.5 1l5 5-5 5" fill="none" stroke="#a9a9a9" stroke-width="1.2"/></svg>
<svg class="ic" style="left:530.50px;top:82.00px" width="8" height="12" viewBox="0 0 8 12"><path d="M1.5 1l5 5-5 5" fill="none" stroke="#a9a9a9" stroke-width="1.2"/></svg>
<svg class="ic" style="left:811.00px;top:82.00px" width="8" height="12" viewBox="0 0 8 12"><path d="M1.5 1l5 5-5 5" fill="none" stroke="#a9a9a9" stroke-width="1.2"/></svg>
<svg class="ic" style="left:919.00px;top:82.00px" width="8" height="12" viewBox="0 0 8 12"><path d="M1.5 1l5 5-5 5" fill="none" stroke="#a9a9a9" stroke-width="1.2"/></svg>
<svg class="ic" style="left:975.50px;top:82.00px" width="8" height="12" viewBox="0 0 8 12"><path d="M1.5 1l5 5-5 5" fill="none" stroke="#a9a9a9" stroke-width="1.2"/></svg>
<svg class="ic" style="left:1039.00px;top:82.00px" width="8" height="12" viewBox="0 0 8 12"><path d="M1.5 1l5 5-5 5" fill="none" stroke="#a9a9a9" stroke-width="1.2"/></svg>
<svg class="ic" style="left:1055.00px;top:83.00px" width="14" height="10.00" viewBox="0 0 14 10"><g fill="#a77bd4"><circle cx="4.3" cy="3.9" r="3.5"/><ellipse cx="9.6" cy="4.1" rx="3.9" ry="3.6"/><rect x="2.3" y="4.5" width="3.6" height="5.3" rx=".6"/><rect x="8.9" y="4.5" width="3.1" height="5.3" rx=".6"/><rect x=".6" y="3.6" width="2" height="5" rx="1"/></g></svg>
<div class="t" style="left:1075.00px;top:78.00px;font-size:14px;color:#a9a9a9;letter-spacing:0.133px;">card-text-and-media.php</div>
<div class="box" style="left:449.00px;top:121.30px;width:1px;height:20.77px;background:#404040"></div><div class="box" style="left:449.00px;top:141.77px;width:1px;height:20.77px;background:#404040"></div><div class="box" style="left:449.00px;top:162.24px;width:1px;height:20.77px;background:#404040"></div><div class="box" style="left:449.00px;top:182.71px;width:1px;height:20.77px;background:#404040"></div><div class="box" style="left:449.00px;top:203.18px;width:1px;height:20.77px;background:#404040"></div><div class="box" style="left:482.16px;top:203.18px;width:1px;height:20.77px;background:#404040"></div><div class="box" style="left:449.00px;top:223.65px;width:1px;height:20.77px;background:#404040"></div><div class="box" style="left:449.00px;top:244.12px;width:1px;height:20.77px;background:#404040"></div><div class="box" style="left:482.16px;top:244.12px;width:1px;height:20.77px;background:#404040"></div><div class="box" style="left:449.00px;top:264.59px;width:1px;height:20.77px;background:#404040"></div><div class="box" style="left:482.16px;top:264.59px;width:1px;height:20.77px;background:#404040"></div><div class="box" style="left:515.32px;top:264.59px;width:1px;height:20.77px;background:#404040"></div><div class="box" style="left:449.00px;top:285.06px;width:1px;height:20.77px;background:#404040"></div><div class="box" style="left:482.16px;top:285.06px;width:1px;height:20.77px;background:#404040"></div><div class="box" style="left:515.32px;top:285.06px;width:1px;height:20.77px;background:#404040"></div><div class="box" style="left:449.00px;top:305.53px;width:1px;height:20.77px;background:#404040"></div><div class="box" style="left:482.16px;top:305.53px;width:1px;height:20.77px;background:#404040"></div><div class="box" style="left:449.00px;top:326.00px;width:1px;height:20.77px;background:#404040"></div><div class="box" style="left:482.16px;top:326.00px;width:1px;height:20.77px;background:#404040"></div><div class="box" style="left:515.32px;top:326.00px;width:1px;height:20.77px;background:#404040"></div><div class="box" style="left:449.00px;top:346.47px;width:1px;height:20.77px;background:#404040"></div><div class="box" style="left:482.16px;top:346.47px;width:1px;height:20.77px;background:#404040"></div><div class="box" style="left:515.32px;top:346.47px;width:1px;height:20.77px;background:#404040"></div><div class="box" style="left:548.48px;top:346.47px;width:1px;height:20.77px;background:#404040"></div><div class="box" style="left:449.00px;top:366.94px;width:1px;height:20.77px;background:#404040"></div><div class="box" style="left:482.16px;top:366.94px;width:1px;height:20.77px;background:#404040"></div><div class="box" style="left:515.32px;top:366.94px;width:1px;height:20.77px;background:#404040"></div><div class="box" style="left:548.48px;top:366.94px;width:1px;height:20.77px;background:#404040"></div><div class="box" style="left:581.64px;top:366.94px;width:1px;height:20.77px;background:#404040"></div><div class="box" style="left:449.00px;top:387.41px;width:1px;height:20.77px;background:#404040"></div><div class="box" style="left:482.16px;top:387.41px;width:1px;height:20.77px;background:#404040"></div><div class="box" style="left:515.32px;top:387.41px;width:1px;height:20.77px;background:#404040"></div><div class="box" style="left:548.48px;top:387.41px;width:1px;height:20.77px;background:#404040"></div><div class="box" style="left:581.64px;top:387.41px;width:1px;height:20.77px;background:#404040"></div><div class="box" style="left:614.80px;top:387.41px;width:1px;height:20.77px;background:#404040"></div><div class="box" style="left:449.00px;top:407.88px;width:1px;height:20.77px;background:#404040"></div><div class="box" style="left:482.16px;top:407.88px;width:1px;height:20.77px;background:#404040"></div><div class="box" style="left:515.32px;top:407.88px;width:1px;height:20.77px;background:#404040"></div><div class="box" style="left:548.48px;top:407.88px;width:1px;height:20.77px;background:#404040"></div><div class="box" style="left:581.64px;top:407.88px;width:1px;height:20.77px;background:#404040"></div><div class="box" style="left:614.80px;top:407.88px;width:1px;height:20.77px;background:#404040"></div><div class="box" style="left:647.96px;top:407.88px;width:1px;height:20.77px;background:#404040"></div><div class="box" style="left:449.00px;top:428.35px;width:1px;height:20.77px;background:#404040"></div><div class="box" style="left:482.16px;top:428.35px;width:1px;height:20.77px;background:#404040"></div><div class="box" style="left:515.32px;top:428.35px;width:1px;height:20.77px;background:#404040"></div><div class="box" style="left:548.48px;top:428.35px;width:1px;height:20.77px;background:#404040"></div><div class="box" style="left:581.64px;top:428.35px;width:1px;height:20.77px;background:#404040"></div><div class="box" style="left:614.80px;top:428.35px;width:1px;height:20.77px;background:#404040"></div><div class="box" style="left:449.00px;top:448.82px;width:1px;height:20.77px;background:#404040"></div><div class="box" style="left:482.16px;top:448.82px;width:1px;height:20.77px;background:#404040"></div><div class="box" style="left:515.32px;top:448.82px;width:1px;height:20.77px;background:#404040"></div><div class="box" style="left:548.48px;top:448.82px;width:1px;height:20.77px;background:#404040"></div><div class="box" style="left:581.64px;top:448.82px;width:1px;height:20.77px;background:#404040"></div><div class="box" style="left:449.00px;top:469.29px;width:1px;height:20.77px;background:#404040"></div><div class="box" style="left:482.16px;top:469.29px;width:1px;height:20.77px;background:#404040"></div><div class="box" style="left:515.32px;top:469.29px;width:1px;height:20.77px;background:#404040"></div><div class="box" style="left:548.48px;top:469.29px;width:1px;height:20.77px;background:#404040"></div><div class="box" style="left:581.64px;top:469.29px;width:1px;height:20.77px;background:#404040"></div><div class="box" style="left:614.80px;top:469.29px;width:1px;height:20.77px;background:#404040"></div><div class="box" style="left:449.00px;top:489.76px;width:1px;height:20.77px;background:#404040"></div><div class="box" style="left:482.16px;top:489.76px;width:1px;height:20.77px;background:#404040"></div><div class="box" style="left:515.32px;top:489.76px;width:1px;height:20.77px;background:#404040"></div><div class="box" style="left:548.48px;top:489.76px;width:1px;height:20.77px;background:#404040"></div><div class="box" style="left:581.64px;top:489.76px;width:1px;height:20.77px;background:#404040"></div><div class="box" style="left:614.80px;top:489.76px;width:1px;height:20.77px;background:#404040"></div><div class="box" style="left:647.96px;top:489.76px;width:1px;height:20.77px;background:#404040"></div><div class="box" style="left:449.00px;top:510.23px;width:1px;height:20.77px;background:#404040"></div><div class="box" style="left:482.16px;top:510.23px;width:1px;height:20.77px;background:#404040"></div><div class="box" style="left:515.32px;top:510.23px;width:1px;height:20.77px;background:#404040"></div><div class="box" style="left:548.48px;top:510.23px;width:1px;height:20.77px;background:#404040"></div><div class="box" style="left:581.64px;top:510.23px;width:1px;height:20.77px;background:#404040"></div><div class="box" style="left:614.80px;top:510.23px;width:1px;height:20.77px;background:#404040"></div><div class="box" style="left:647.96px;top:510.23px;width:1px;height:20.77px;background:#404040"></div><div class="box" style="left:681.12px;top:510.23px;width:1px;height:20.77px;background:#404040"></div><div class="box" style="left:449.00px;top:530.70px;width:1px;height:20.77px;background:#404040"></div><div class="box" style="left:482.16px;top:530.70px;width:1px;height:20.77px;background:#404040"></div><div class="box" style="left:515.32px;top:530.70px;width:1px;height:20.77px;background:#404040"></div><div class="box" style="left:548.48px;top:530.70px;width:1px;height:20.77px;background:#404040"></div><div class="box" style="left:581.64px;top:530.70px;width:1px;height:20.77px;background:#404040"></div><div class="box" style="left:614.80px;top:530.70px;width:1px;height:20.77px;background:#404040"></div><div class="box" style="left:647.96px;top:530.70px;width:1px;height:20.77px;background:#404040"></div><div class="box" style="left:681.12px;top:530.70px;width:1px;height:20.77px;background:#404040"></div><div class="box" style="left:714.28px;top:530.70px;width:1px;height:20.77px;background:#404040"></div><div class="box" style="left:449.00px;top:551.17px;width:1px;height:20.77px;background:#404040"></div><div class="box" style="left:482.16px;top:551.17px;width:1px;height:20.77px;background:#404040"></div><div class="box" style="left:515.32px;top:551.17px;width:1px;height:20.77px;background:#404040"></div><div class="box" style="left:548.48px;top:551.17px;width:1px;height:20.77px;background:#404040"></div><div class="box" style="left:581.64px;top:551.17px;width:1px;height:20.77px;background:#404040"></div><div class="box" style="left:614.80px;top:551.17px;width:1px;height:20.77px;background:#404040"></div><div class="box" style="left:647.96px;top:551.17px;width:1px;height:20.77px;background:#404040"></div><div class="box" style="left:681.12px;top:551.17px;width:1px;height:20.77px;background:#404040"></div><div class="box" style="left:714.28px;top:551.17px;width:1px;height:20.77px;background:#404040"></div><div class="box" style="left:449.00px;top:571.64px;width:1px;height:20.77px;background:#404040"></div><div class="box" style="left:482.16px;top:571.64px;width:1px;height:20.77px;background:#404040"></div><div class="box" style="left:515.32px;top:571.64px;width:1px;height:20.77px;background:#404040"></div><div class="box" style="left:548.48px;top:571.64px;width:1px;height:20.77px;background:#404040"></div><div class="box" style="left:581.64px;top:571.64px;width:1px;height:20.77px;background:#404040"></div><div class="box" style="left:614.80px;top:571.64px;width:1px;height:20.77px;background:#404040"></div><div class="box" style="left:647.96px;top:571.64px;width:1px;height:20.77px;background:#404040"></div><div class="box" style="left:681.12px;top:571.64px;width:1px;height:20.77px;background:#404040"></div><div class="box" style="left:449.00px;top:592.11px;width:1px;height:20.77px;background:#404040"></div><div class="box" style="left:482.16px;top:592.11px;width:1px;height:20.77px;background:#404040"></div><div class="box" style="left:515.32px;top:592.11px;width:1px;height:20.77px;background:#404040"></div><div class="box" style="left:548.48px;top:592.11px;width:1px;height:20.77px;background:#404040"></div><div class="box" style="left:581.64px;top:592.11px;width:1px;height:20.77px;background:#404040"></div><div class="box" style="left:614.80px;top:592.11px;width:1px;height:20.77px;background:#404040"></div><div class="box" style="left:647.96px;top:592.11px;width:1px;height:20.77px;background:#404040"></div><div class="box" style="left:449.00px;top:612.58px;width:1px;height:20.77px;background:#404040"></div><div class="box" style="left:482.16px;top:612.58px;width:1px;height:20.77px;background:#404040"></div><div class="box" style="left:515.32px;top:612.58px;width:1px;height:20.77px;background:#404040"></div><div class="box" style="left:548.48px;top:612.58px;width:1px;height:20.77px;background:#404040"></div><div class="box" style="left:581.64px;top:612.58px;width:1px;height:20.77px;background:#404040"></div><div class="box" style="left:614.80px;top:612.58px;width:1px;height:20.77px;background:#404040"></div><div class="box" style="left:647.96px;top:612.58px;width:1px;height:20.77px;background:#404040"></div><div class="box" style="left:681.12px;top:612.58px;width:1px;height:20.77px;background:#404040"></div><div class="box" style="left:449.00px;top:633.05px;width:1px;height:20.77px;background:#404040"></div><div class="box" style="left:482.16px;top:633.05px;width:1px;height:20.77px;background:#404040"></div><div class="box" style="left:515.32px;top:633.05px;width:1px;height:20.77px;background:#404040"></div><div class="box" style="left:548.48px;top:633.05px;width:1px;height:20.77px;background:#404040"></div><div class="box" style="left:581.64px;top:633.05px;width:1px;height:20.77px;background:#404040"></div><div class="box" style="left:614.80px;top:633.05px;width:1px;height:20.77px;background:#404040"></div><div class="box" style="left:647.96px;top:633.05px;width:1px;height:20.77px;background:#404040"></div><div class="box" style="left:449.00px;top:653.52px;width:1px;height:20.77px;background:#404040"></div><div class="box" style="left:482.16px;top:653.52px;width:1px;height:20.77px;background:#404040"></div><div class="box" style="left:515.32px;top:653.52px;width:1px;height:20.77px;background:#404040"></div><div class="box" style="left:548.48px;top:653.52px;width:1px;height:20.77px;background:#404040"></div><div class="box" style="left:581.64px;top:653.52px;width:1px;height:20.77px;background:#404040"></div><div class="box" style="left:614.80px;top:653.52px;width:1px;height:20.77px;background:#404040"></div><div class="box" style="left:449.00px;top:673.99px;width:1px;height:20.77px;background:#404040"></div><div class="box" style="left:482.16px;top:673.99px;width:1px;height:20.77px;background:#404040"></div><div class="box" style="left:515.32px;top:673.99px;width:1px;height:20.77px;background:#404040"></div><div class="box" style="left:548.48px;top:673.99px;width:1px;height:20.77px;background:#404040"></div><div class="box" style="left:581.64px;top:673.99px;width:1px;height:20.77px;background:#404040"></div><div class="box" style="left:449.00px;top:694.46px;width:1px;height:20.77px;background:#404040"></div><div class="box" style="left:482.16px;top:694.46px;width:1px;height:20.77px;background:#404040"></div><div class="box" style="left:515.32px;top:694.46px;width:1px;height:20.77px;background:#404040"></div><div class="box" style="left:548.48px;top:694.46px;width:1px;height:20.77px;background:#404040"></div><div class="box" style="left:581.64px;top:694.46px;width:1px;height:20.77px;background:#404040"></div><div class="box" style="left:614.80px;top:694.46px;width:1px;height:20.77px;background:#404040"></div><div class="box" style="left:449.00px;top:714.93px;width:1px;height:20.77px;background:#404040"></div><div class="box" style="left:482.16px;top:714.93px;width:1px;height:20.77px;background:#404040"></div><div class="box" style="left:515.32px;top:714.93px;width:1px;height:20.77px;background:#404040"></div><div class="box" style="left:548.48px;top:714.93px;width:1px;height:20.77px;background:#404040"></div><div class="box" style="left:581.64px;top:714.93px;width:1px;height:20.77px;background:#404040"></div><div class="box" style="left:614.80px;top:714.93px;width:1px;height:20.77px;background:#404040"></div><div class="box" style="left:647.96px;top:714.93px;width:1px;height:20.77px;background:#404040"></div><div class="box" style="left:449.00px;top:735.40px;width:1px;height:20.77px;background:#404040"></div><div class="box" style="left:482.16px;top:735.40px;width:1px;height:20.77px;background:#404040"></div><div class="box" style="left:515.32px;top:735.40px;width:1px;height:20.77px;background:#404040"></div><div class="box" style="left:548.48px;top:735.40px;width:1px;height:20.77px;background:#404040"></div><div class="box" style="left:581.64px;top:735.40px;width:1px;height:20.77px;background:#404040"></div><div class="box" style="left:614.80px;top:735.40px;width:1px;height:20.77px;background:#404040"></div><div class="box" style="left:647.96px;top:735.40px;width:1px;height:20.77px;background:#404040"></div><div class="box" style="left:681.12px;top:735.40px;width:1px;height:20.77px;background:#404040"></div><div class="box" style="left:449.00px;top:755.87px;width:1px;height:20.77px;background:#404040"></div><div class="box" style="left:482.16px;top:755.87px;width:1px;height:20.77px;background:#404040"></div><div class="box" style="left:515.32px;top:755.87px;width:1px;height:20.77px;background:#404040"></div><div class="box" style="left:548.48px;top:755.87px;width:1px;height:20.77px;background:#404040"></div><div class="box" style="left:581.64px;top:755.87px;width:1px;height:20.77px;background:#404040"></div><div class="box" style="left:614.80px;top:755.87px;width:1px;height:20.77px;background:#404040"></div><div class="box" style="left:647.96px;top:755.87px;width:1px;height:20.77px;background:#404040"></div><div class="box" style="left:681.12px;top:755.87px;width:1px;height:20.77px;background:#404040"></div><div class="box" style="left:714.28px;top:755.87px;width:1px;height:20.77px;background:#707070"></div><div class="box" style="left:449.00px;top:776.34px;width:1px;height:20.77px;background:#404040"></div><div class="box" style="left:482.16px;top:776.34px;width:1px;height:20.77px;background:#404040"></div><div class="box" style="left:515.32px;top:776.34px;width:1px;height:20.77px;background:#404040"></div><div class="box" style="left:548.48px;top:776.34px;width:1px;height:20.77px;background:#404040"></div><div class="box" style="left:581.64px;top:776.34px;width:1px;height:20.77px;background:#404040"></div><div class="box" style="left:614.80px;top:776.34px;width:1px;height:20.77px;background:#404040"></div><div class="box" style="left:647.96px;top:776.34px;width:1px;height:20.77px;background:#404040"></div><div class="box" style="left:681.12px;top:776.34px;width:1px;height:20.77px;background:#404040"></div><div class="box" style="left:714.28px;top:776.34px;width:1px;height:20.77px;background:#707070"></div><div class="box" style="left:747.44px;top:776.34px;width:1px;height:20.77px;background:#404040"></div><div class="box" style="left:449.00px;top:796.81px;width:1px;height:20.77px;background:#404040"></div><div class="box" style="left:482.16px;top:796.81px;width:1px;height:20.77px;background:#404040"></div><div class="box" style="left:515.32px;top:796.81px;width:1px;height:20.77px;background:#404040"></div><div class="box" style="left:548.48px;top:796.81px;width:1px;height:20.77px;background:#404040"></div><div class="box" style="left:581.64px;top:796.81px;width:1px;height:20.77px;background:#404040"></div><div class="box" style="left:614.80px;top:796.81px;width:1px;height:20.77px;background:#404040"></div><div class="box" style="left:647.96px;top:796.81px;width:1px;height:20.77px;background:#404040"></div><div class="box" style="left:681.12px;top:796.81px;width:1px;height:20.77px;background:#404040"></div><div class="box" style="left:714.28px;top:796.81px;width:1px;height:20.77px;background:#707070"></div><div class="box" style="left:747.44px;top:796.81px;width:1px;height:20.77px;background:#404040"></div><div class="box" style="left:780.60px;top:796.81px;width:1px;height:20.77px;background:#404040"></div><div class="box" style="left:449.00px;top:817.28px;width:1px;height:20.77px;background:#404040"></div><div class="box" style="left:482.16px;top:817.28px;width:1px;height:20.77px;background:#404040"></div><div class="box" style="left:515.32px;top:817.28px;width:1px;height:20.77px;background:#404040"></div><div class="box" style="left:548.48px;top:817.28px;width:1px;height:20.77px;background:#404040"></div><div class="box" style="left:581.64px;top:817.28px;width:1px;height:20.77px;background:#404040"></div><div class="box" style="left:614.80px;top:817.28px;width:1px;height:20.77px;background:#404040"></div><div class="box" style="left:647.96px;top:817.28px;width:1px;height:20.77px;background:#404040"></div><div class="box" style="left:681.12px;top:817.28px;width:1px;height:20.77px;background:#404040"></div><div class="box" style="left:714.28px;top:817.28px;width:1px;height:20.77px;background:#707070"></div><div class="box" style="left:747.44px;top:817.28px;width:1px;height:20.77px;background:#404040"></div><div class="box" style="left:780.60px;top:817.28px;width:1px;height:20.77px;background:#404040"></div><div class="box" style="left:813.76px;top:817.28px;width:1px;height:20.77px;background:#404040"></div><div class="box" style="left:449.00px;top:837.75px;width:1px;height:20.77px;background:#404040"></div><div class="box" style="left:482.16px;top:837.75px;width:1px;height:20.77px;background:#404040"></div><div class="box" style="left:515.32px;top:837.75px;width:1px;height:20.77px;background:#404040"></div><div class="box" style="left:548.48px;top:837.75px;width:1px;height:20.77px;background:#404040"></div><div class="box" style="left:581.64px;top:837.75px;width:1px;height:20.77px;background:#404040"></div><div class="box" style="left:614.80px;top:837.75px;width:1px;height:20.77px;background:#404040"></div><div class="box" style="left:647.96px;top:837.75px;width:1px;height:20.77px;background:#404040"></div><div class="box" style="left:681.12px;top:837.75px;width:1px;height:20.77px;background:#404040"></div><div class="box" style="left:714.28px;top:837.75px;width:1px;height:20.77px;background:#707070"></div><div class="box" style="left:747.44px;top:837.75px;width:1px;height:20.77px;background:#404040"></div><div class="box" style="left:780.60px;top:837.75px;width:1px;height:20.77px;background:#404040"></div><div class="box" style="left:449.00px;top:858.22px;width:1px;height:20.77px;background:#404040"></div><div class="box" style="left:482.16px;top:858.22px;width:1px;height:20.77px;background:#404040"></div><div class="box" style="left:515.32px;top:858.22px;width:1px;height:20.77px;background:#404040"></div><div class="box" style="left:548.48px;top:858.22px;width:1px;height:20.77px;background:#404040"></div><div class="box" style="left:581.64px;top:858.22px;width:1px;height:20.77px;background:#404040"></div><div class="box" style="left:614.80px;top:858.22px;width:1px;height:20.77px;background:#404040"></div><div class="box" style="left:647.96px;top:858.22px;width:1px;height:20.77px;background:#404040"></div><div class="box" style="left:681.12px;top:858.22px;width:1px;height:20.77px;background:#404040"></div><div class="box" style="left:714.28px;top:858.22px;width:1px;height:20.77px;background:#707070"></div><div class="box" style="left:747.44px;top:858.22px;width:1px;height:20.77px;background:#404040"></div><div class="box" style="left:449.00px;top:878.69px;width:1px;height:20.77px;background:#404040"></div><div class="box" style="left:482.16px;top:878.69px;width:1px;height:20.77px;background:#404040"></div><div class="box" style="left:515.32px;top:878.69px;width:1px;height:20.77px;background:#404040"></div><div class="box" style="left:548.48px;top:878.69px;width:1px;height:20.77px;background:#404040"></div><div class="box" style="left:581.64px;top:878.69px;width:1px;height:20.77px;background:#404040"></div><div class="box" style="left:614.80px;top:878.69px;width:1px;height:20.77px;background:#404040"></div><div class="box" style="left:647.96px;top:878.69px;width:1px;height:20.77px;background:#404040"></div><div class="box" style="left:681.12px;top:878.69px;width:1px;height:20.77px;background:#404040"></div><div class="box" style="left:714.28px;top:878.69px;width:1px;height:20.77px;background:#707070"></div><div class="box" style="left:449.00px;top:899.16px;width:1px;height:20.77px;background:#404040"></div><div class="box" style="left:482.16px;top:899.16px;width:1px;height:20.77px;background:#404040"></div><div class="box" style="left:515.32px;top:899.16px;width:1px;height:20.77px;background:#404040"></div><div class="box" style="left:548.48px;top:899.16px;width:1px;height:20.77px;background:#404040"></div><div class="box" style="left:581.64px;top:899.16px;width:1px;height:20.77px;background:#404040"></div><div class="box" style="left:614.80px;top:899.16px;width:1px;height:20.77px;background:#404040"></div><div class="box" style="left:647.96px;top:899.16px;width:1px;height:20.77px;background:#404040"></div><div class="box" style="left:681.12px;top:899.16px;width:1px;height:20.77px;background:#404040"></div><div class="box" style="left:449.00px;top:919.63px;width:1px;height:20.77px;background:#404040"></div><div class="box" style="left:482.16px;top:919.63px;width:1px;height:20.77px;background:#404040"></div><div class="box" style="left:515.32px;top:919.63px;width:1px;height:20.77px;background:#404040"></div><div class="box" style="left:548.48px;top:919.63px;width:1px;height:20.77px;background:#404040"></div><div class="box" style="left:581.64px;top:919.63px;width:1px;height:20.77px;background:#404040"></div><div class="box" style="left:614.80px;top:919.63px;width:1px;height:20.77px;background:#404040"></div><div class="box" style="left:647.96px;top:919.63px;width:1px;height:20.77px;background:#404040"></div><div class="box" style="left:449.00px;top:940.10px;width:1px;height:20.77px;background:#404040"></div><div class="box" style="left:482.16px;top:940.10px;width:1px;height:20.77px;background:#404040"></div><div class="box" style="left:515.32px;top:940.10px;width:1px;height:20.77px;background:#404040"></div><div class="box" style="left:548.48px;top:940.10px;width:1px;height:20.77px;background:#404040"></div><div class="box" style="left:581.64px;top:940.10px;width:1px;height:20.77px;background:#404040"></div><div class="box" style="left:614.80px;top:940.10px;width:1px;height:20.77px;background:#404040"></div><div class="box" style="left:449.00px;top:960.57px;width:1px;height:20.77px;background:#404040"></div><div class="box" style="left:482.16px;top:960.57px;width:1px;height:20.77px;background:#404040"></div><div class="box" style="left:515.32px;top:960.57px;width:1px;height:20.77px;background:#404040"></div><div class="box" style="left:548.48px;top:960.57px;width:1px;height:20.77px;background:#404040"></div><div class="box" style="left:581.64px;top:960.57px;width:1px;height:20.77px;background:#404040"></div><div class="box" style="left:614.80px;top:960.57px;width:1px;height:20.77px;background:#404040"></div><div class="box" style="left:449.00px;top:981.04px;width:1px;height:20.77px;background:#404040"></div><div class="box" style="left:482.16px;top:981.04px;width:1px;height:20.77px;background:#404040"></div><div class="box" style="left:515.32px;top:981.04px;width:1px;height:20.77px;background:#404040"></div><div class="box" style="left:548.48px;top:981.04px;width:1px;height:20.77px;background:#404040"></div><div class="box" style="left:581.64px;top:981.04px;width:1px;height:20.77px;background:#404040"></div><div class="box" style="left:614.80px;top:981.04px;width:1px;height:20.77px;background:#404040"></div><div class="box" style="left:647.96px;top:981.04px;width:1px;height:20.77px;background:#404040"></div><div class="box" style="left:449.00px;top:1001.51px;width:1px;height:20.77px;background:#404040"></div><div class="box" style="left:482.16px;top:1001.51px;width:1px;height:20.77px;background:#404040"></div><div class="box" style="left:515.32px;top:1001.51px;width:1px;height:20.77px;background:#404040"></div><div class="box" style="left:548.48px;top:1001.51px;width:1px;height:20.77px;background:#404040"></div><div class="box" style="left:581.64px;top:1001.51px;width:1px;height:20.77px;background:#404040"></div><div class="box" style="left:614.80px;top:1001.51px;width:1px;height:20.77px;background:#404040"></div><div class="box" style="left:647.96px;top:1001.51px;width:1px;height:20.77px;background:#404040"></div><div class="box" style="left:681.12px;top:1001.51px;width:1px;height:20.77px;background:#404040"></div><div class="box" style="left:449.00px;top:1021.98px;width:1px;height:20.77px;background:#404040"></div><div class="box" style="left:482.16px;top:1021.98px;width:1px;height:20.77px;background:#404040"></div><div class="box" style="left:515.32px;top:1021.98px;width:1px;height:20.77px;background:#404040"></div><div class="box" style="left:548.48px;top:1021.98px;width:1px;height:20.77px;background:#404040"></div><div class="box" style="left:581.64px;top:1021.98px;width:1px;height:20.77px;background:#404040"></div><div class="box" style="left:614.80px;top:1021.98px;width:1px;height:20.77px;background:#404040"></div><div class="box" style="left:647.96px;top:1021.98px;width:1px;height:20.77px;background:#404040"></div><div class="box" style="left:681.12px;top:1021.98px;width:1px;height:20.77px;background:#404040"></div><div class="box" style="left:449.00px;top:1042.45px;width:1px;height:20.77px;background:#404040"></div><div class="box" style="left:482.16px;top:1042.45px;width:1px;height:20.77px;background:#404040"></div><div class="box" style="left:515.32px;top:1042.45px;width:1px;height:20.77px;background:#404040"></div><div class="box" style="left:548.48px;top:1042.45px;width:1px;height:20.77px;background:#404040"></div><div class="box" style="left:581.64px;top:1042.45px;width:1px;height:20.77px;background:#404040"></div><div class="box" style="left:614.80px;top:1042.45px;width:1px;height:20.77px;background:#404040"></div><div class="box" style="left:647.96px;top:1042.45px;width:1px;height:20.77px;background:#404040"></div><div class="box" style="left:681.12px;top:1042.45px;width:1px;height:20.77px;background:#404040"></div><div class="box" style="left:449.00px;top:1062.92px;width:1px;height:20.77px;background:#404040"></div><div class="box" style="left:482.16px;top:1062.92px;width:1px;height:20.77px;background:#404040"></div><div class="box" style="left:515.32px;top:1062.92px;width:1px;height:20.77px;background:#404040"></div><div class="box" style="left:548.48px;top:1062.92px;width:1px;height:20.77px;background:#404040"></div><div class="box" style="left:581.64px;top:1062.92px;width:1px;height:20.77px;background:#404040"></div><div class="box" style="left:614.80px;top:1062.92px;width:1px;height:20.77px;background:#404040"></div><div class="box" style="left:647.96px;top:1062.92px;width:1px;height:20.77px;background:#404040"></div><div class="box" style="left:681.12px;top:1062.92px;width:1px;height:20.77px;background:#404040"></div><div class="box" style="left:449px;top:732.6px;width:1471px;height:17.7px;border-top:1.5px solid #2a2a2a;border-bottom:1.5px solid #2a2a2a"></div><div class="box" style="left:1045.38px;top:673.19px;width:8.89px;height:20.47px;border:1px solid #8a8a8a;box-sizing:border-box"></div><div class="ln" style="top:121.30px;color:#6e7681">13</div><div class="cl" style="left:482.16px;top:120.50px"><span class="qp">&lt;?php</span><span class="qw"> </span><span class="qf">echo</span><span class="qw"> </span><span class="qv">$block_css_classes</span><span class="qo"> ? </span><span class="qf">esc_attr</span><span class="qg">(</span><span class="qv">$block_css_classes</span><span class="qg">)</span><span class="qo"> : </span><span class="qs">&#x27;&#x27;</span><span class="qo">;</span><span class="qw"> </span><span class="qp">?&gt;</span></div><div class="ln" style="top:141.77px;color:#6e7681">14</div><div class="cl" style="left:482.16px;top:140.97px"><span class="qp">&lt;?php</span><span class="qw"> </span><span class="qf">echo</span><span class="qw"> </span><span class="qv">$section_style</span><span class="qg">[</span><span class="qs">&#x27;text_colors&#x27;</span><span class="qg">]</span><span class="qo">;</span><span class="qw"> </span><span class="qp">?&gt;</span></div><div class="ln" style="top:162.24px;color:#6e7681">15</div><div class="cl" style="left:482.16px;top:161.44px"><span class="qs">&quot;</span></div><div class="ln" style="top:182.71px;color:#6e7681">16</div><div class="cl" style="left:482.16px;top:181.91px"><span class="qp">&lt;?php</span><span class="qw"> </span><span class="qk">if</span><span class="qg">(</span><span class="qv">$section_style</span><span class="qr">[</span><span class="qs">&#x27;background_color&#x27;</span><span class="qr">]</span><span class="qg">)</span><span class="qg">{</span><span class="qw"> </span><span class="qp">?&gt;</span></div><div class="ln" style="top:203.18px;color:#6e7681">17</div><div class="cl" style="left:515.32px;top:202.38px"><span class="qa">style</span><span class="qo">=</span><span class="qs">&quot;background-color: </span><span class="qp">&lt;?php</span><span class="qw"> </span><span class="qf">echo</span><span class="qw"> </span><span class="qv">$section_style</span><span class="qr">[</span><span class="qs">&#x27;background_color&#x27;</span><span class="qr">]</span><span class="qo">;</span><span class="qw"> </span><span class="qp">?&gt;</span><span class="qs">&quot;</span></div><div class="ln" style="top:223.65px;color:#6e7681">18</div><div class="cl" style="left:482.16px;top:222.85px"><span class="qp">&lt;?php</span><span class="qw"> </span><span class="qg">}</span><span class="qw"> </span><span class="qp">?&gt;</span><span class="qt">&gt;</span></div><div class="ln" style="top:244.12px;color:#6e7681">19</div><div class="cl" style="left:515.32px;top:243.32px"><span class="qt">&lt;</span><span class="qn">div</span><span class="qw"> </span><span class="qa">class</span><span class="qo">=</span><span class="qs">&quot;row row--2col-equal row--gap-lg</span></div><div class="ln" style="top:264.59px;color:#6e7681">20</div><div class="cl" style="left:548.48px;top:263.79px"><span class="qp">&lt;?php</span><span class="qw"> </span><span class="qf">echo</span><span class="qw"> </span><span class="qv">$section_style</span><span class="qg">[</span><span class="qs">&#x27;inverted_column&#x27;</span><span class="qg">]</span><span class="qo">;</span><span class="qw"> </span><span class="qp">?&gt;</span></div><div class="ln" style="top:285.06px;color:#6e7681">21</div><div class="cl" style="left:548.48px;top:284.26px"><span class="qp">&lt;?php</span><span class="qw"> </span><span class="qf">echo</span><span class="qw"> </span><span class="qv">$section_style</span><span class="qg">[</span><span class="qs">&#x27;column_allignment&#x27;</span><span class="qg">]</span><span class="qo">;</span><span class="qw"> </span><span class="qp">?&gt;</span></div><div class="ln" style="top:305.53px;color:#6e7681">22</div><div class="cl" style="left:515.32px;top:304.73px"><span class="qs">&quot;</span><span class="qt">&gt;</span></div><div class="ln" style="top:326.00px;color:#6e7681">23</div><div class="cl" style="left:548.48px;top:325.20px"><span class="qt">&lt;</span><span class="qn">div</span><span class="qw"> </span><span class="qa">class</span><span class="qo">=</span><span class="qs">&quot;column&quot;</span><span class="qt">&gt;</span></div><div class="ln" style="top:346.47px;color:#6e7681">24</div><div class="cl" style="left:581.64px;top:345.67px"><span class="qt">&lt;</span><span class="qn">div</span><span class="qw"> </span><span class="qa">class</span><span class="qo">=</span><span class="qs">&quot;landing-text-and-media-images-wrapper&quot;</span><span class="qt">&gt;</span></div><div class="ln" style="top:366.94px;color:#6e7681">25</div><div class="cl" style="left:614.80px;top:366.14px"><span class="qp">&lt;?php</span><span class="qw"> </span><span class="qk">if</span><span class="qg">(</span><span class="qv">$media_content_choise</span><span class="qo"> === </span><span class="qs">&#x27;image&#x27;</span><span class="qg">)</span><span class="qg">{</span><span class="qw"> </span><span class="qp">?&gt;</span></div><div class="ln" style="top:387.41px;color:#6e7681">26</div><div class="cl" style="left:647.96px;top:386.61px"><span class="qt">&lt;</span><span class="qn">div</span><span class="qw"> </span><span class="qa">class</span><span class="qo">=</span><span class="qs">&quot;block--image&quot;</span><span class="qt">&gt;</span></div><div class="ln" style="top:407.88px;color:#6e7681">27</div><div class="cl" style="left:681.12px;top:407.08px"><span class="qt">&lt;</span><span class="qn">img</span><span class="qw"> </span><span class="qa">src</span><span class="qo">=</span><span class="qs">&quot;</span><span class="qp">&lt;?php</span><span class="qw"> </span><span class="qf">echo</span><span class="qw"> </span><span class="qv">$media_content</span><span class="qr">[</span><span class="qs">&#x27;image&#x27;</span><span class="qr">]</span><span class="qo">;</span><span class="qw"> </span><span class="qp">?&gt;</span><span class="qs">&quot;</span><span class="qt">&gt;</span></div><div class="ln" style="top:428.35px;color:#6e7681">28</div><div class="cl" style="left:647.96px;top:427.55px"><span class="qt">&lt;/</span><span class="qn">div</span><span class="qt">&gt;</span></div><div class="ln" style="top:448.82px;color:#6e7681">29</div><div class="cl" style="left:614.80px;top:448.02px"><span class="qp">&lt;?php</span><span class="qw"> </span><span class="qg">}</span><span class="qw"> </span><span class="qk">else</span><span class="qw"> </span><span class="qk">if</span><span class="qg">(</span><span class="qv">$media_content_choise</span><span class="qo"> === </span><span class="qs">&#x27;video&#x27;</span><span class="qg">)</span><span class="qg">{</span><span class="qw"> </span><span class="qp">?&gt;</span></div><div class="ln" style="top:469.29px;color:#6e7681">30</div><div class="cl" style="left:647.96px;top:468.49px"><span class="qt">&lt;</span><span class="qn">div</span><span class="qw"> </span><span class="qa">class</span><span class="qo">=</span><span class="qs">&quot;block--video&quot;</span><span class="qt">&gt;</span></div><div class="ln" style="top:489.76px;color:#6e7681">31</div><div class="cl" style="left:681.12px;top:488.96px"><span class="qp">&lt;?php</span><span class="qw"> </span><span class="qk">if</span><span class="qr">(</span><span class="qv">$media_content</span><span class="qb">[</span><span class="qs">&#x27;video&#x27;</span><span class="qb">]</span><span class="qb">[</span><span class="qs">&#x27;video_type&#x27;</span><span class="qb">]</span><span class="qo"> === </span><span class="qs">&#x27;static&#x27;</span><span class="qr">)</span><span class="qr">{</span><span class="qw"> </span><span class="qp">?&gt;</span></div><div class="ln" style="top:510.23px;color:#6e7681">32</div><div class="cl" style="left:714.28px;top:509.43px"><span class="qt">&lt;</span><span class="qn">video</span><span class="qw"> </span><span class="qa">width</span><span class="qo">=</span><span class="qs">&quot;100%&quot;</span><span class="qw"> </span><span class="qa">height</span><span class="qo">=</span><span class="qs">&quot;clamp(350px, 23.437vw, 450px)&quot;</span><span class="qw"> </span><span class="qa">muted</span><span class="qw"> </span><span class="qa">autoplay</span><span class="qw"> </span><span class="qa">loop</span><span class="qw"> </span><span class="qa">controls</span><span class="qt">&gt;</span></div><div class="ln" style="top:530.70px;color:#6e7681">33</div><div class="cl" style="left:747.44px;top:529.90px"><span class="qt">&lt;</span><span class="qn">source</span><span class="qw"> </span><span class="qa">src</span><span class="qo">=</span><span class="qs">&quot;</span><span class="qp">&lt;?php</span><span class="qw"> </span><span class="qf">echo</span><span class="qw"> </span><span class="qv">$media_content</span><span class="qb">[</span><span class="qs">&#x27;video&#x27;</span><span class="qb">]</span><span class="qb">[</span><span class="qs">&#x27;local_video&#x27;</span><span class="qb">]</span><span class="qo">;</span><span class="qw"> </span><span class="qp">?&gt;</span><span class="qs">&quot;</span><span class="qw"> </span><span class="qa">type</span><span class="qo">=</span><span class="qs">&quot;video/mp4&quot;</span><span class="qt">&gt;</span></div><div class="ln" style="top:551.17px;color:#6e7681">34</div><div class="cl" style="left:747.44px;top:550.37px"><span class="qw">Your browser does not support the video tag.</span></div><div class="ln" style="top:571.64px;color:#6e7681">35</div><div class="cl" style="left:714.28px;top:570.84px"><span class="qt">&lt;/</span><span class="qn">video</span><span class="qt">&gt;</span></div><div class="ln" style="top:592.11px;color:#6e7681">36</div><div class="cl" style="left:681.12px;top:591.31px"><span class="qp">&lt;?php</span><span class="qw"> </span><span class="qr">}</span><span class="qw"> </span><span class="qk">else</span><span class="qw"> </span><span class="qr">{</span><span class="qw"> </span><span class="qp">?&gt;</span></div><div class="ln" style="top:612.58px;color:#6e7681">37</div><div class="cl" style="left:714.28px;top:611.78px"><span class="qp">&lt;?php</span><span class="qw"> </span><span class="qf">echo</span><span class="qw"> </span><span class="qv">$media_content</span><span class="qb">[</span><span class="qs">&#x27;video&#x27;</span><span class="qb">]</span><span class="qb">[</span><span class="qs">&#x27;embed_video&#x27;</span><span class="qb">]</span><span class="qo">;</span><span class="qw"> </span><span class="qp">?&gt;</span></div><div class="ln" style="top:633.05px;color:#6e7681">38</div><div class="cl" style="left:681.12px;top:632.25px"><span class="qp">&lt;?php</span><span class="qw"> </span><span class="qr">}</span><span class="qp">?&gt;</span></div><div class="ln" style="top:653.52px;color:#6e7681">39</div><div class="cl" style="left:647.96px;top:652.72px"><span class="qt">&lt;/</span><span class="qn">div</span><span class="qt">&gt;</span></div><div class="ln" style="top:673.99px;color:#6e7681">40</div><div class="cl" style="left:614.80px;top:673.19px"><span class="qp">&lt;?php</span><span class="qw"> </span><span class="qg">}</span><span class="qw"> </span><span class="qk">else</span><span class="qw"> </span><span class="qk">if</span><span class="qg">(</span><span class="qv">$media_content_choise</span><span class="qo"> === </span><span class="qs">&#x27;gallery&#x27;</span><span class="qg">)</span><span class="qg">{</span><span class="qw"> </span><span class="qp">?&gt;</span></div><div class="ln" style="top:694.46px;color:#6e7681">41</div><div class="cl" style="left:647.96px;top:693.66px"><span class="qt">&lt;</span><span class="qn">div</span><span class="qw"> </span><span class="qa">class</span><span class="qo">=</span><span class="qs">&quot;landing-gallery-splide-wrapper&quot;</span><span class="qt">&gt;</span></div><div class="ln" style="top:714.93px;color:#6e7681">42</div><div class="cl" style="left:681.12px;top:714.13px"><span class="qt">&lt;</span><span class="qn">div</span><span class="qw"> </span><span class="qa">class</span><span class="qo">=</span><span class="qs">&quot;splide landing-gallery-splide&quot;</span><span class="qw"> </span><span class="qa">id</span><span class="qo">=</span><span class="qs">&quot;landing-gallery-splide-</span><span class="qp">&lt;?php</span><span class="qw"> </span><span class="qf">echo</span><span class="qw"> </span><span class="qf">esc_attr</span><span class="qr">(</span><span class="qv">$raw_block_id</span><span class="qr">)</span><span class="qo">;</span><span class="qw"> </span><span class="qp">?&gt;</span><span class="qs">&quot;</span><span class="qt">&gt;</span></div><div class="ln" style="top:735.40px;color:#cccccc">43</div><div class="cl" style="left:714.28px;top:734.60px"><span class="qt">&lt;</span><span class="qn">div</span><span class="qw"> </span><span class="qa">class</span><span class="qo">=</span><span class="qs">&quot;splide__track&quot;</span><span class="qt">&gt;</span></div><div class="ln" style="top:755.87px;color:#6e7681">44</div><div class="cl" style="left:747.44px;top:755.07px"><span class="qt">&lt;</span><span class="qn">ul</span><span class="qw"> </span><span class="qa">class</span><span class="qo">=</span><span class="qs">&quot;splide__list&quot;</span><span class="qt">&gt;</span></div><div class="ln" style="top:776.34px;color:#6e7681">45</div><div class="cl" style="left:780.60px;top:775.54px"><span class="qp">&lt;?php</span><span class="qw"> </span><span class="qk">foreach</span><span class="qr">(</span><span class="qv">$media_content</span><span class="qb">[</span><span class="qs">&#x27;carousel_gallery&#x27;</span><span class="qb">]</span><span class="qw"> </span><span class="qo">as</span><span class="qw"> </span><span class="qv">$gallery_image</span><span class="qr">)</span><span class="qr">{</span><span class="qw"> </span><span class="qp">?&gt;</span></div><div class="ln" style="top:796.81px;color:#6e7681">46</div><div class="cl" style="left:813.76px;top:796.01px"><span class="qt">&lt;</span><span class="qn">li</span><span class="qw"> </span><span class="qa">class</span><span class="qo">=</span><span class="qs">&quot;splide__slide&quot;</span><span class="qt">&gt;</span></div><div class="ln" style="top:817.28px;color:#6e7681">47</div><div class="cl" style="left:846.92px;top:816.48px"><span class="qt">&lt;</span><span class="qn">img</span><span class="qw"> </span><span class="qa">src</span><span class="qo">=</span><span class="qs">&quot;</span><span class="qp">&lt;?php</span><span class="qw"> </span><span class="qf">echo</span><span class="qw"> </span><span class="qf">esc_url</span><span class="qb">(</span><span class="qv">$gallery_image</span><span class="qb">)</span><span class="qo">;</span><span class="qw"> </span><span class="qp">?&gt;</span><span class="qs">&quot;</span><span class="qw"> </span><span class="qa">alt</span><span class="qo">=</span><span class="qs">&quot;&quot;</span><span class="qt">&gt;</span></div><div class="ln" style="top:837.75px;color:#6e7681">48</div><div class="cl" style="left:813.76px;top:836.95px"><span class="qt">&lt;/</span><span class="qn">li</span><span class="qt">&gt;</span></div><div class="ln" style="top:858.22px;color:#6e7681">49</div><div class="cl" style="left:780.60px;top:857.42px"><span class="qp">&lt;?php</span><span class="qw"> </span><span class="qr">}</span><span class="qw"> </span><span class="qp">?&gt;</span></div><div class="ln" style="top:878.69px;color:#6e7681">50</div><div class="cl" style="left:747.44px;top:877.89px"><span class="qt">&lt;/</span><span class="qn">ul</span><span class="qt">&gt;</span></div><div class="ln" style="top:899.16px;color:#6e7681">51</div><div class="cl" style="left:714.28px;top:898.36px"><span class="qt">&lt;/</span><span class="qn">div</span><span class="qt">&gt;</span></div><div class="ln" style="top:919.63px;color:#6e7681">52</div><div class="cl" style="left:681.12px;top:918.83px"><span class="qt">&lt;/</span><span class="qn">div</span><span class="qt">&gt;</span></div><div class="ln" style="top:940.10px;color:#6e7681">53</div><div class="cl" style="left:647.96px;top:939.30px"><span class="qt">&lt;/</span><span class="qn">div</span><span class="qt">&gt;</span></div><div class="ln" style="top:960.57px;color:#6e7681">54</div><div class="cl" style="left:647.96px;top:959.77px"><span class="qt">&lt;</span><span class="qn">script</span><span class="qt">&gt;</span></div><div class="ln" style="top:981.04px;color:#6e7681">55</div><div class="cl" style="left:681.12px;top:980.24px"><span class="qf">jQuery</span><span class="qr">(</span><span class="qn">function</span><span class="qw"> </span><span class="qb">()</span><span class="qw"> </span><span class="qb">{</span></div><div class="ln" style="top:1001.51px;color:#6e7681">56</div><div class="cl" style="left:714.28px;top:1000.71px"><span class="qn">var</span><span class="qw"> </span><span class="qv">el</span><span class="qo"> = </span><span class="qv">document</span><span class="qo">.</span><span class="qf">getElementById</span><span class="qg">(</span><span class="qs">&#x27;landing-gallery-splide-</span><span class="qp">&lt;?php</span><span class="qw"> </span><span class="qf">echo</span><span class="qw"> </span><span class="qf">esc_js</span><span class="qr">(</span><span class="qv">$raw_block_id</span><span class="qr">)</span><span class="qo">;</span><span class="qw"> </span><span class="qp">?&gt;</span><span class="qs">&#x27;</span><span class="qg">)</span><span class="qo">;</span></div><div class="ln" style="top:1021.98px;color:#6e7681">57</div><div class="cl" style="left:714.28px;top:1021.18px"><span class="qk">if</span><span class="qw"> </span><span class="qg">(</span><span class="qo">!</span><span class="qv">el</span><span class="qg">)</span><span class="qw"> </span><span class="qk">return</span><span class="qo">;</span></div><div class="ln" style="top:1042.45px;color:#6e7681">58</div><div class="cl" style="left:714.28px;top:1041.65px"></div><div class="ln" style="top:1062.92px;color:#6e7681">59</div><div class="cl" style="left:714.28px;top:1062.12px"><span class="qc">// evita doppia init se il blocco viene renderizzato più volte</span></div>
<div class="box" style="left:374px;top:99px;width:1546px;height:20.47px;background:#1f1f1f;box-shadow:0 3px 4px -1px rgba(0,0,0,0.75)"></div>
<div class="ln" style="top:100.3px;color:#6e7681">9</div>
<div class="cl" style="left:449.00px;top:99.5px"><span class="qt">&lt;</span><span class="qn">div</span><span class="qw"> </span><span class="qa">id</span><span class="qo">=</span><span class="qs">&quot;</span><span class="qp">&lt;?php</span><span class="qw"> </span><span class="qf">echo</span><span class="qw"> </span><span class="qv">$raw_block_id</span><span class="qo">;</span><span class="qw"> </span><span class="qp">?&gt;</span><span class="qs">&quot;</span><span class="qt">&gt;</span></div>
<div class="box" style="left:1458px;top:99px;width:449px;height:35px;background:#202020;box-shadow:0 2px 6px 1px rgba(0,0,0,0.55);border-left:3px solid #3a3a3a;border-bottom:1px solid #2e2e2e;border-radius:0 0 4px 4px;box-sizing:border-box"></div>
<svg class="ic" style="left:1466.50px;top:110.00px" width="8" height="12" viewBox="0 0 8 12"><path d="M1.5 1l5 5-5 5" fill="none" stroke="#cccccc" stroke-width="1.2"/></svg>
<div class="box" style="left:1481px;top:102px;width:237px;height:27px;background:#313131;border-radius:2px"></div>
<div class="t" style="left:1488.00px;top:106.50px;font-size:14px;color:#cccccc;letter-spacing:0.464px;">align-</div>
<div class="t" style="left:1650.00px;top:106.50px;font-size:13px;color:#c5c5c5;letter-spacing:-0.203px;">Aa</div>
<div class="t" style="left:1674.00px;top:106.00px;font-size:13px;color:#c5c5c5;letter-spacing:0.000px;">ab</div>
<svg class="ic" style="left:1672px;top:121px" width="20" height="5" viewBox="0 0 20 5"><path d="M1 .5v1.5a1.5 1.5 0 0 0 1.5 1.5h15a1.5 1.5 0 0 0 1.5-1.5V.5" fill="none" stroke="#c5c5c5" stroke-width="1.1"/></svg>
<div class="box" style="left:1700.5px;top:120.5px;width:2.5px;height:2.5px;background:#c5c5c5;border-radius:50%"></div>
<svg class="ic" style="left:1702px;top:109px" width="9" height="9" viewBox="0 0 9 9"><path d="M4.5 .8v7.4M1.3 2.65l6.4 3.7M1.3 6.35l6.4-3.7" stroke="#c5c5c5" stroke-width="1.5"/></svg>
<div class="t" style="left:1724.00px;top:107.00px;font-size:13px;color:#e85450;letter-spacing:-0.003px;">No results</div>
<svg class="ic" style="left:1803px;top:108px" width="15" height="16" viewBox="0 0 15 16"><path d="M7.5 15V2M2.5 7l5-5 5 5" fill="none" stroke="#8a8a8a" stroke-width="1.3"/></svg>
<svg class="ic" style="left:1830px;top:108px" width="15" height="16" viewBox="0 0 15 16"><path d="M7.5 1v13M2.5 9l5 5 5-5" fill="none" stroke="#8a8a8a" stroke-width="1.3"/></svg>
<svg class="ic" style="left:1857px;top:109px" width="15" height="14" viewBox="0 0 15 14"><path d="M1.5 3h12M1.5 7h10M1.5 11h13.5" fill="none" stroke="#c5c5c5" stroke-width="1.2"/></svg>
<svg class="ic" style="left:1884px;top:109px" width="14" height="14" viewBox="0 0 14 14"><path d="M1.5 1.5l11 11M12.5 1.5l-11 11" fill="none" stroke="#cccccc" stroke-width="1.4"/></svg>
</body></html>
